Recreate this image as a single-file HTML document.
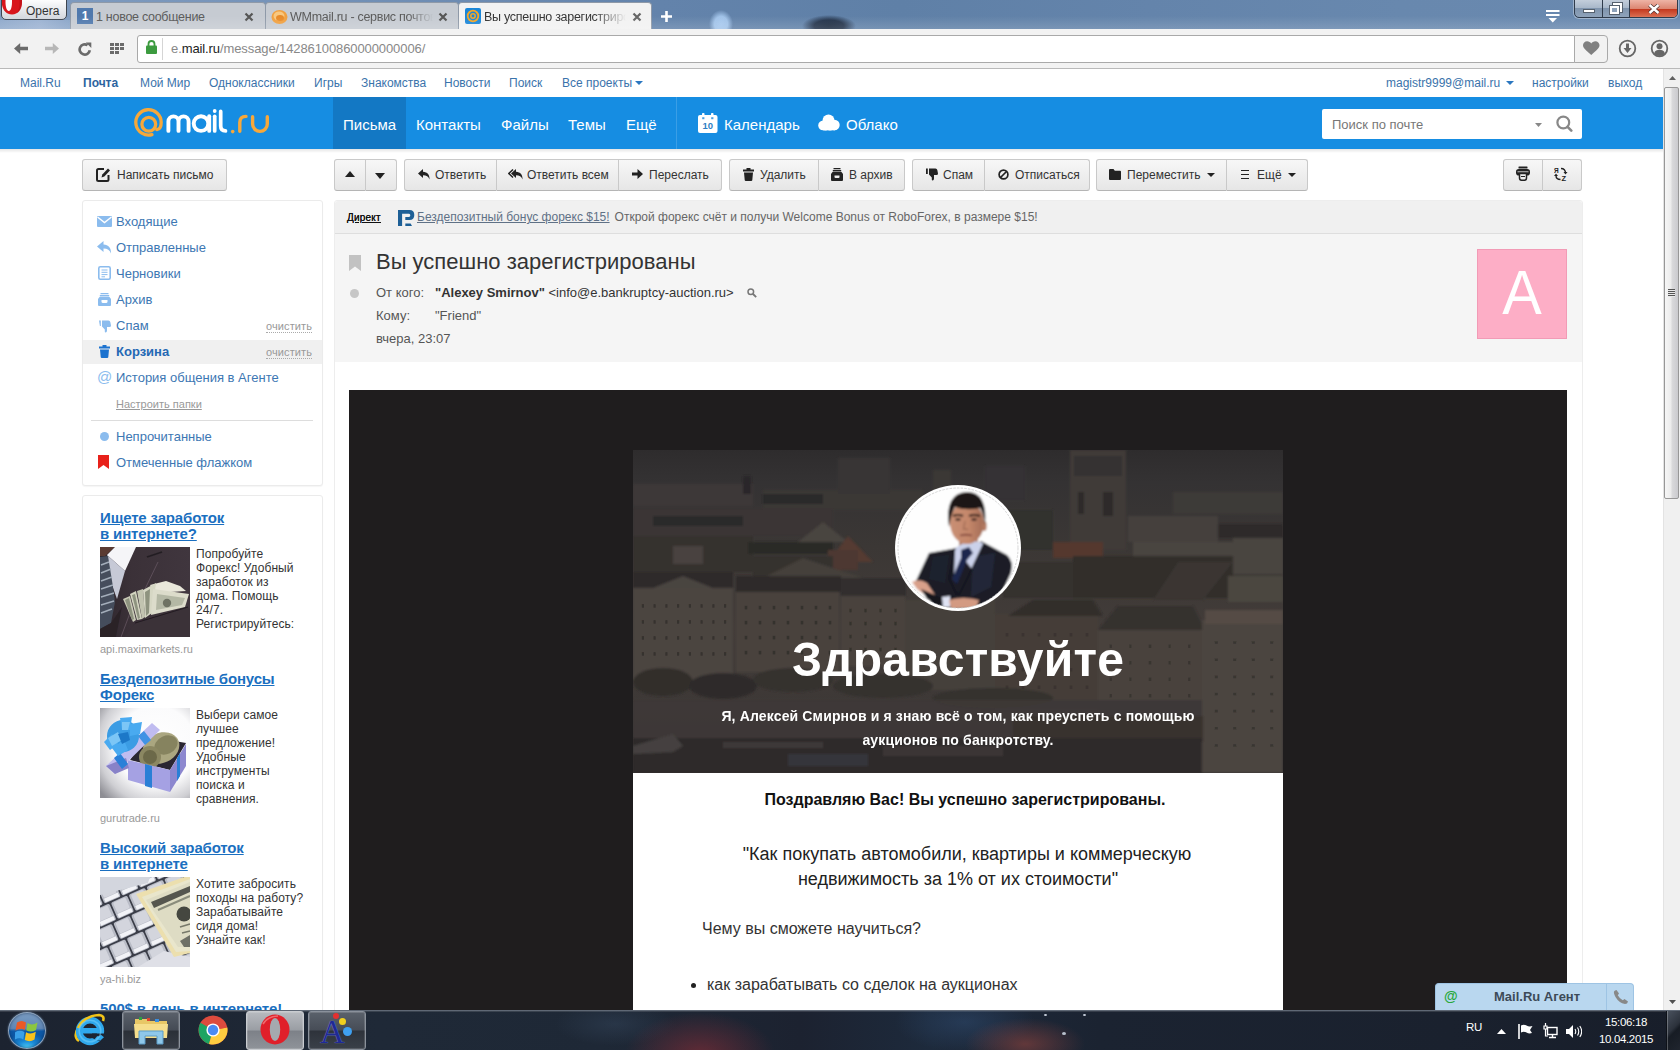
<!DOCTYPE html>
<html lang="ru">
<head>
<meta charset="utf-8">
<title>Вы успешно зарегистрированы</title>
<style>
*{box-sizing:border-box;margin:0;padding:0}
html,body{width:1680px;height:1050px;overflow:hidden;background:#fff}
body{font-family:"Liberation Sans",sans-serif;font-size:13px;color:#333;position:relative}
.abs{position:absolute}
a{text-decoration:none;color:inherit}

/* ---------- browser chrome ---------- */
#titlebar{left:0;top:0;width:1680px;height:30px;background:linear-gradient(90deg,#809cc0 0,#7593b9 280px,#6383ab 660px,#5f80a7 900px,#6484ab 1150px,#6888ae 1400px,#6a89af 1680px)}
#toolbar{left:0;top:29px;width:1680px;height:40px;background:#f2f2f2;border-bottom:1px solid #b9b9b9}
.tab{top:2px;height:28px;font-size:13px;color:#555;white-space:nowrap;overflow:hidden}
.tab .t{position:absolute;top:6px;font-size:13px;letter-spacing:-0.1px}
.tab .x{position:absolute;top:4px;font-size:15px;font-weight:bold;color:#6a6a6a}
#urlbar{left:137px;top:35px;width:1438px;height:28px;background:#fff;border:1px solid #a9a9a9;border-radius:3px 0 0 3px}

/* ---------- portal nav ---------- */
#pnav{left:0;top:69px;width:1663px;height:28px;background:#fff;font-size:12px;color:#3a73ab}
#pnav span{position:absolute;top:7px;white-space:nowrap}

/* ---------- blue header ---------- */
#bluehead{left:0;top:97px;width:1663px;height:52px;background:#168de2}
#bluehead .nv{position:absolute;top:19px;font-size:15px;color:#fff;white-space:nowrap}

/* ---------- toolbar buttons ---------- */
.btn{top:159px;height:32px;border:1px solid #c9c9c9;border-bottom-color:#b5b5b5;background:linear-gradient(#f7f7f7,#e6e6e6);font-size:12px;color:#333;white-space:nowrap}
.btn.l{border-radius:3px 0 0 3px}
.btn.r{border-radius:0 3px 3px 0;border-left:none}
.btn.m{border-left:none}
.btn.s{border-radius:3px}
.bt{top:168px;font-size:12px;color:#333;white-space:nowrap;line-height:15px}
.btn svg{position:absolute}

.sl{left:116px;font-size:13px;color:#3d77b3;white-space:nowrap;line-height:15px}
.cl{left:266px;font-size:11px;color:#999;white-space:nowrap;line-height:12px;border-bottom:1px dotted #aaa;letter-spacing:0.1px}
.ah{left:100px;font-size:15px;font-weight:bold;color:#1a6fc0;text-decoration:underline;line-height:16px;white-space:nowrap;letter-spacing:-0.15px;margin-top:1px}
.ai{left:100px;width:90px;height:90px;background:#444;overflow:hidden}
.at{left:196px;font-size:12px;color:#333;line-height:14px;white-space:nowrap;letter-spacing:0.08px}
.au{left:100px;font-size:11px;color:#999;white-space:nowrap;line-height:13px;margin-top:1px}
.hf{font-size:13px;color:#555;white-space:nowrap;line-height:15px}
/* ---------- scrollbar ---------- */
#vscroll{left:1663px;top:69px;width:17px;height:941px;background:#f0f0f0;border-left:1px solid #e3e3e3}

/* ---------- taskbar ---------- */
#taskbar{left:0;top:1010px;width:1680px;height:40px;background:#1b2535;overflow:hidden}
.tb{top:1px;height:39px;border:1px solid #8a919b;border-radius:3px;box-shadow:inset 0 0 0 1px rgba(255,255,255,.15)}
</style>
</head>
<body>

<!-- ===== title bar / tabs ===== -->
<div id="titlebar" class="abs"></div>
<div class="abs" style="left:706px;top:8px;width:30px;height:22px;background:radial-gradient(ellipse 12px 14px at 15px 16px,#a6c8ee 0,#a0c2e8 55%,rgba(160,194,232,0) 100%)"></div>
<div class="abs" style="left:796px;top:10px;width:66px;height:20px;background:radial-gradient(ellipse 27px 11px at 33px 16px,#1b2a3f 0,#22324a 55%,rgba(34,50,74,0) 100%)"></div>
<!-- Opera menu button -->
<div class="abs" style="left:0;top:20px;width:70px;height:10px;background:linear-gradient(90deg,#8fa9cb,#9bb2d2 40px,#8aa5c8 70px)"></div>
<div class="abs" style="left:1px;top:-2px;width:66px;height:22px;background:linear-gradient(#ffffff,#e4e7eb 60%,#d3d7dd);border:1px solid #3e4650;border-radius:0 0 5px 5px"></div>
<svg class="abs" style="left:2px;top:0" width="21" height="15" viewBox="0 0 21 15"><path d="M0 0H20V2C20 9.500 16 14.500 10 14.500C4.500 14.500 1 10.500 0 5Z" fill="#d8161c"/><path d="M3.500 0H10V2C10 7 8.800 11 6.800 11C4.800 11 3.500 7 3.500 2Z" fill="#fff"/><path d="M10 0H20V2C20 7 18 11 15 13C17 10 17.500 6 17.500 2V0Z" fill="#b80f15" opacity="0.600"/></svg>
<div class="abs" style="left:26px;top:4px;font-size:12px;color:#333;letter-spacing:0">Opera</div>

<!-- tab 1 -->
<div class="abs tab" style="left:70px;width:196px;background:#c6cbd2;border:1px solid #8e99a8;border-bottom:none;border-radius:4px 4px 0 0"></div>
<div class="abs" style="left:77px;top:8px;width:16px;height:16px;background:#5079ad;color:#fff;font-size:12px;font-weight:bold;text-align:center;line-height:17px">1</div>
<div class="abs" style="left:96px;top:10px;font-size:12.500px;color:#5a5a5a;letter-spacing:-0.28px">1 новое сообщение</div>
<svg class="abs" style="left:244px;top:12px" width="10" height="10" viewBox="0 0 10 10"><path d="M1.500 1.500L8.500 8.500M8.500 1.500L1.500 8.500" stroke="#555" stroke-width="2.200"/></svg>

<!-- tab 2 -->
<div class="abs tab" style="left:265px;width:194px;background:#c6cbd2;border:1px solid #8e99a8;border-bottom:none;border-radius:4px 4px 0 0"></div>
<svg class="abs" style="left:271px;top:8px" width="17" height="17" viewBox="0 0 17 17"><ellipse cx="8.500" cy="9" rx="8" ry="7" fill="#f0a040"/><ellipse cx="8" cy="8" rx="5.500" ry="4.500" fill="#f8c880"/><ellipse cx="9" cy="10" rx="4" ry="3" fill="#e88a28"/></svg>
<div class="abs" style="left:290px;top:10px;width:143px;overflow:hidden;white-space:nowrap;font-size:12.500px;color:#5a5a5a;letter-spacing:-0.28px;-webkit-mask-image:linear-gradient(90deg,#000 118px,transparent 143px)">WMmail.ru - сервис почтовых</div>
<svg class="abs" style="left:438px;top:12px" width="10" height="10" viewBox="0 0 10 10"><path d="M1.500 1.500L8.500 8.500M8.500 1.500L1.500 8.500" stroke="#555" stroke-width="2.200"/></svg>

<!-- tab 3 active -->
<div class="abs tab" style="left:458px;width:194px;height:28px;background:#f2f2f2;border:1px solid #8e99a8;border-bottom:none;border-radius:4px 4px 0 0"></div>
<svg class="abs" style="left:465px;top:8px" width="16" height="16" viewBox="0 0 16 16"><rect width="16" height="16" rx="2" fill="#1a86d8"/><circle cx="8" cy="8" r="5.300" fill="none" stroke="#f5a623" stroke-width="1.800"/><circle cx="8" cy="8" r="2.200" fill="none" stroke="#f5a623" stroke-width="1.500"/></svg>
<div class="abs" style="left:484px;top:10px;width:142px;overflow:hidden;white-space:nowrap;font-size:12.500px;color:#333;letter-spacing:-0.28px;-webkit-mask-image:linear-gradient(90deg,#000 110px,transparent 142px)">Вы успешно зарегистрированы</div>
<svg class="abs" style="left:632px;top:12px" width="10" height="10" viewBox="0 0 10 10"><path d="M1.500 1.500L8.500 8.500M8.500 1.500L1.500 8.500" stroke="#666" stroke-width="2.200"/></svg>
<!-- new tab plus -->
<svg class="abs" style="left:660px;top:10px" width="13" height="13" viewBox="0 0 13 13"><path d="M6.500 1V12M1 6.500H12" stroke="#fff" stroke-width="2.600"/></svg>

<!-- window controls -->
<div class="abs" style="left:0;top:16px;width:1680px;height:14px;background:linear-gradient(rgba(255,255,255,0),rgba(255,255,255,.16))"></div>
<svg class="abs" style="left:1546px;top:10px" width="14" height="13" viewBox="0 0 14 13"><path d="M0 1H13.500M0 5H13.500" stroke="#fff" stroke-width="2"/><path d="M2.500 8H11L6.750 12.500Z" fill="#fff"/></svg>
<div class="abs" style="left:1574px;top:-1px;width:104px;height:19px;border:1px solid #2f3b4b;border-radius:0 0 5px 5px;background:linear-gradient(#c3cedb,#a9b8ca 45%,#7f94ad 50%,#8fa3ba);overflow:hidden;box-shadow:0 0 0 1px rgba(255,255,255,.35)">
 <div class="abs" style="left:27px;top:0;width:1px;height:19px;background:#2f3b4b"></div>
 <div class="abs" style="left:54px;top:0;width:1px;height:19px;background:#2f3b4b"></div>
 <div class="abs" style="left:55px;top:0;width:48px;height:19px;background:linear-gradient(#eeb4a6,#dc8672 45%,#c43a20 50%,#d9694c 85%,#e99a84)"></div>
 <div class="abs" style="left:8px;top:9px;width:12px;height:4px;background:#fff;border:1px solid #56616e"></div>
 <div class="abs" style="left:38px;top:3px;width:9px;height:9px;border:2px solid #fff;outline:1px solid #56616e;background:#a9b8ca"></div>
 <div class="abs" style="left:35px;top:6px;width:9px;height:8px;border:2px solid #fff;outline:1px solid #56616e;background:#8fa3ba"></div>
 <svg class="abs" style="left:73px;top:4px" width="12" height="10" viewBox="0 0 12 10"><path d="M1.500 1L10.500 9M10.500 1L1.500 9" stroke="#4a3030" stroke-width="3.800"/><path d="M1.500 1L10.500 9M10.500 1L1.500 9" stroke="#fff" stroke-width="2.400"/></svg>
</div>

<div id="toolbar" class="abs"></div>
<!-- nav icons -->
<svg class="abs" style="left:14px;top:43px" width="14" height="11" viewBox="0 0 14 11"><path d="M6.200 0L0 5.500L6.200 11V7.300H14V3.700H6.200Z" fill="#6b6b6b"/></svg>
<svg class="abs" style="left:45px;top:43px" width="14" height="11" viewBox="0 0 14 11"><path d="M7.800 0L14 5.500L7.800 11V7.300H0V3.700H7.800Z" fill="#b7b7b7"/></svg>
<svg class="abs" style="left:78px;top:42px" width="14" height="14" viewBox="0 0 14 14"><path d="M11.800 8.300A5.100 5.100 0 1 1 9.600 3.200" fill="none" stroke="#6b6b6b" stroke-width="2.700"/><path d="M7.800 0.500H13.300V6Z" fill="#6b6b6b"/></svg>
<svg class="abs" style="left:110px;top:43px" width="14" height="11" viewBox="0 0 14 11"><g fill="#6b6b6b"><rect x="0" y="0" width="4" height="3"/><rect x="5" y="0" width="4" height="3"/><rect x="10" y="0" width="4" height="3"/><rect x="0" y="4" width="4" height="3"/><rect x="5" y="4" width="4" height="3"/><rect x="10" y="4" width="4" height="3"/><rect x="0" y="8" width="4" height="3"/><rect x="5" y="8" width="4" height="3"/></g></svg>
<div id="urlbar" class="abs"></div>
<svg class="abs" style="left:146px;top:40px" width="11" height="14" viewBox="0 0 11 14"><path d="M2.500 6V4A3 3 0 0 1 8.500 4V6" fill="none" stroke="#3c9b3f" stroke-width="1.800"/><rect x="0" y="5.500" width="11" height="8.500" rx="1" fill="#3c9b3f"/></svg>
<div class="abs" style="left:162px;top:38px;width:1px;height:22px;background:#d5d5d5"></div>
<div class="abs" style="left:171px;top:41px;font-size:13px;color:#888;letter-spacing:-0.1px;white-space:nowrap">e.<span style="color:#222">mail.ru</span>/message/14286100860000000006/</div>
<!-- heart -->
<div class="abs" style="left:1574px;top:35px;width:34px;height:28px;background:#f2f2f2;border:1px solid #a9a9a9;border-radius:0 4px 4px 0"></div>
<svg class="abs" style="left:1583px;top:41px" width="16.500" height="14" viewBox="0 0 18 15"><path d="M9 15C3 10 0 7.500 0 4.500C0 2 2 0 4.500 0C6.500 0 8 1 9 2.500C10 1 11.500 0 13.500 0C16 0 18 2 18 4.500C18 7.500 15 10 9 15Z" fill="#808080"/></svg>
<svg class="abs" style="left:1618px;top:39px" width="19" height="19" viewBox="0 0 19 19"><circle cx="9.500" cy="9.500" r="7.800" fill="none" stroke="#666" stroke-width="1.800"/><path d="M8 4.500H11V9H13.500L9.500 14L5.500 9H8Z" fill="#666"/></svg>
<svg class="abs" style="left:1650px;top:39px" width="19" height="19" viewBox="0 0 19 19"><circle cx="9.500" cy="9.500" r="7.800" fill="none" stroke="#666" stroke-width="1.800"/><circle cx="9.500" cy="7.300" r="3" fill="#666"/><path d="M4 14.500C5 11.500 7 10.800 9.500 10.800C12 10.800 14 11.500 15 14.500C13.500 16.300 11.500 17 9.500 17C7.500 17 5.500 16.300 4 14.500Z" fill="#666"/></svg>

<!-- ===== portal nav ===== -->
<div id="pnav" class="abs">
<span style="left:20px">Mail.Ru</span>
<span style="left:83px;font-weight:bold;color:#2d64a0">Почта</span>
<span style="left:140px">Мой Мир</span>
<span style="left:209px">Одноклассники</span>
<span style="left:314px">Игры</span>
<span style="left:361px">Знакомства</span>
<span style="left:444px">Новости</span>
<span style="left:509px">Поиск</span>
<span style="left:562px">Все проекты</span>
<svg class="abs" style="left:635px;top:12px" width="8" height="4" viewBox="0 0 8 4"><path d="M0 0H8L4 4Z" fill="#2b77c0"/></svg>
<span style="left:1386px">magistr9999@mail.ru</span>
<svg class="abs" style="left:1506px;top:12px" width="8" height="4" viewBox="0 0 8 4"><path d="M0 0H8L4 4Z" fill="#2b77c0"/></svg>
<span style="left:1532px">настройки</span>
<span style="left:1608px">выход</span>
</div>

<!-- ===== blue header ===== -->
<div id="bluehead" class="abs">
 <div class="abs" style="left:333px;top:0;width:73px;height:52px;background:#1378c4"></div>
 <!-- logo -->
 <svg class="abs" style="left:132px;top:10px" width="140" height="32" viewBox="0 0 140 32">
  <g fill="none" stroke-linecap="round" stroke-linejoin="round">
   <circle cx="16.800" cy="17.200" r="6.900" stroke="#f7a83a" stroke-width="3.300"/>
   <path d="M20 27.600A12.700 12.700 0 1 1 29.200 15.300C29.200 19.500 28 22.800 24.800 22.600" stroke="#f7a83a" stroke-width="3.300"/>
   <path d="M36.400 23.900V14.400A5.050 5.050 0 0 1 46.500 14.400V23.900M46.500 14.400A5.050 5.050 0 0 1 56.600 14.400V23.900" stroke="#fff" stroke-width="3.900"/>
   <circle cx="69" cy="16.600" r="7.300" stroke="#fff" stroke-width="3.900"/>
   <path d="M77.200 9.300V23.900" stroke="#fff" stroke-width="3.900"/>
   <path d="M82.700 9.300V23.900" stroke="#fff" stroke-width="3.700"/>
   <circle cx="82.700" cy="4" r="1.900" fill="#fff" stroke="none"/>
   <path d="M88.700 4.400V19Q88.700 23.900 93.500 23.900" stroke="#fff" stroke-width="3.700"/>
   <circle cx="100.700" cy="24.600" r="1.800" fill="#f7a83a" stroke="none"/>
   <path d="M107.800 24.200V15.500Q107.800 9.400 114 9.400" stroke="#f7a83a" stroke-width="3.400"/>
   <path d="M120.600 9.800V17A7.350 7.350 0 0 0 135.300 17V9.800" stroke="#f7a83a" stroke-width="3.400"/>
  </g>
 </svg>
 <span class="nv" style="left:343px">Письма</span>
 <span class="nv" style="left:416px">Контакты</span>
 <span class="nv" style="left:501px">Файлы</span>
 <span class="nv" style="left:568px">Темы</span>
 <span class="nv" style="left:626px">Ещё</span>
 <div class="abs" style="left:676px;top:0;width:1px;height:52px;background:#3a9ee6"></div>
 <!-- calendar icon -->
 <svg class="abs" style="left:698px;top:16px" width="20" height="20" viewBox="0 0 20 20"><rect x="0" y="2" width="19.500" height="18" rx="2" fill="#fff"/><rect x="4" y="0" width="2.500" height="4" rx="0.800" fill="#fff"/><rect x="13" y="0" width="2.500" height="4" rx="0.800" fill="#fff"/><rect x="4.200" y="4.200" width="2.200" height="2" fill="#4a9fe0"/><rect x="13.200" y="4.200" width="2.200" height="2" fill="#4a9fe0"/><text x="9.800" y="16" font-family="Liberation Sans, sans-serif" font-size="9.500" font-weight="bold" fill="#2f7fc4" text-anchor="middle">10</text></svg>
 <span class="nv" style="left:724px">Календарь</span>
 <!-- cloud icon -->
 <svg class="abs" style="left:818px;top:17px" width="22" height="17" viewBox="0 0 22 17"><circle cx="5" cy="11.500" r="4.800" fill="#fff"/><circle cx="10.500" cy="6.500" r="6" fill="#fff"/><circle cx="16.500" cy="11" r="5.200" fill="#fff"/><rect x="5" y="9" width="12" height="7.300" fill="#fff"/><circle cx="7.500" cy="13" r="3.500" fill="#fff"/><circle cx="12" cy="13" r="3.500" fill="#fff"/></svg>
 <span class="nv" style="left:846px">Облако</span>
 <!-- search -->
 <div class="abs" style="left:1322px;top:12px;width:260px;height:30px;background:#fff;border-radius:2px"></div>
 <span class="abs" style="left:1332px;top:20px;font-size:13px;color:#777;white-space:nowrap">Поиск по почте</span>
 <svg class="abs" style="left:1535px;top:26px" width="7" height="4" viewBox="0 0 7 4"><path d="M0 0H7L3.500 4Z" fill="#888"/></svg>
 <svg class="abs" style="left:1556px;top:18px" width="17" height="17" viewBox="0 0 17 17"><circle cx="7.300" cy="7.500" r="5.900" fill="none" stroke="#888" stroke-width="2.200"/><path d="M11.600 11.800L15.300 15.600" stroke="#888" stroke-width="2.600" stroke-linecap="round"/></svg>
</div>

<!-- ===== buttons ===== -->
<div class="abs" style="left:0;top:149px;width:1663px;height:4px;background:linear-gradient(rgba(0,0,0,.10),rgba(0,0,0,0))"></div>
<!-- compose -->
<div class="abs btn s" style="left:82px;width:145px"></div>
<svg class="abs" style="left:96px;top:167px" width="15" height="15" viewBox="0 0 15 15"><path d="M8 2H2.500Q1 2 1 3.500V12.500Q1 14 2.500 14H11Q12.500 14 12.500 12.500V8" fill="none" stroke="#222" stroke-width="2"/><path d="M5.500 10.500L6.300 7.500L12 1.500L14 3.500L8.300 9.500Z" fill="#222"/></svg>
<div class="abs bt" style="left:117px">Написать письмо</div>
<!-- up/down -->
<div class="abs btn l" style="left:334px;width:32px"></div><div class="abs btn r" style="left:366px;width:31px"></div>
<svg class="abs" style="left:345px;top:171px" width="10" height="6" viewBox="0 0 10 6"><path d="M0 6H10L5 0Z" fill="#222"/></svg>
<svg class="abs" style="left:375px;top:173px" width="10" height="6" viewBox="0 0 10 6"><path d="M0 0H10L5 6Z" fill="#222"/></svg>
<!-- reply group -->
<div class="abs btn l" style="left:404px;width:93px"></div><div class="abs btn m" style="left:497px;width:122px"></div><div class="abs btn r" style="left:619px;width:103px"></div>
<svg class="abs" style="left:418px;top:169px" width="12" height="11" viewBox="0 0 12 11"><path d="M5 0L0 4.500L5 9V6.200C8.500 6.200 10.500 7.500 11.500 10.500C11.800 6 9.500 3 5 2.800Z" fill="#222"/></svg>
<div class="abs bt" style="left:435px">Ответить</div>
<svg class="abs" style="left:508px;top:169px" width="15" height="11" viewBox="0 0 15 11"><path d="M8 0L3 4.500L8 9V6.200C11.500 6.200 13.500 7.500 14.500 10.500C14.800 6 12.500 3 8 2.800Z" fill="#222"/><path d="M5 0.500L0.800 4.500L5 8.500" fill="none" stroke="#222" stroke-width="1.500"/></svg>
<div class="abs bt" style="left:527px">Ответить всем</div>
<svg class="abs" style="left:632px;top:169px" width="11" height="10" viewBox="0 0 11 10"><path d="M5.500 0L11 5L5.500 10V6.500H0V3.500H5.500Z" fill="#222"/></svg>
<div class="abs bt" style="left:649px">Переслать</div>
<!-- delete group -->
<div class="abs btn l" style="left:729px;width:90px"></div><div class="abs btn r" style="left:819px;width:86px"></div>
<svg class="abs" style="left:743px;top:168px" width="11" height="13" viewBox="0 0 11 13"><path d="M0 1.500H3.500V0H7.500V1.500H11V3.500H0Z" fill="#222"/><path d="M1 4.500H10L9.300 12Q9.200 13 8.200 13H2.800Q1.800 13 1.700 12Z" fill="#222"/></svg>
<div class="abs bt" style="left:760px">Удалить</div>
<svg class="abs" style="left:831px;top:168px" width="12" height="13" viewBox="0 0 12 13"><path d="M2.500 0H9.500V1.200H2.500ZM1.800 2H10.200V3.500H1.800Z" fill="#222"/><path d="M0 6L1.500 4H10.500L12 6V12Q12 13 11 13H1Q0 13 0 12Z" fill="#222"/><path d="M3.500 7.500H8.500V9Q8.500 10 7.500 10H4.500Q3.500 10 3.500 9Z" fill="#eee"/></svg>
<div class="abs bt" style="left:849px">В архив</div>
<!-- spam group -->
<div class="abs btn l" style="left:912px;width:73px"></div><div class="abs btn r" style="left:985px;width:105px"></div>
<svg class="abs" style="left:926px;top:168px" width="12" height="13" viewBox="0 0 12 13"><path d="M0 0.500H1.800V6H0Z" fill="#222"/><path d="M3 0.500H9.500Q11 0.500 11.300 2L12 5.500Q12 7 10.500 7H8V10.500Q8 12.500 6.500 12.500Q5.800 12.500 5.800 11.500V9.500L3 6.500Z" fill="#222"/></svg>
<div class="abs bt" style="left:943px">Спам</div>
<svg class="abs" style="left:998px;top:169px" width="11" height="11" viewBox="0 0 11 11"><circle cx="5.500" cy="5.500" r="4.400" fill="none" stroke="#222" stroke-width="1.700"/><path d="M2.500 8.500L8.500 2.500" stroke="#222" stroke-width="1.700"/></svg>
<div class="abs bt" style="left:1015px">Отписаться</div>
<!-- move group -->
<div class="abs btn l" style="left:1096px;width:131px"></div><div class="abs btn r" style="left:1227px;width:81px"></div>
<svg class="abs" style="left:1109px;top:169px" width="12" height="11" viewBox="0 0 12 11"><path d="M0 1Q0 0 1 0H4.500L5.800 1.800H11Q12 1.800 12 2.800V10Q12 11 11 11H1Q0 11 0 10Z" fill="#222"/></svg>
<div class="abs bt" style="left:1127px">Переместить</div>
<svg class="abs" style="left:1207px;top:173px" width="8" height="4" viewBox="0 0 8 4"><path d="M0 0H8L4 4Z" fill="#222"/></svg>
<svg class="abs" style="left:1241px;top:170px" width="8" height="9" viewBox="0 0 8 9"><path d="M0 0.500H8M0 4.500H8M0 8.500H8" stroke="#222" stroke-width="1.200"/></svg>
<div class="abs bt" style="left:1257px">Ещё</div>
<svg class="abs" style="left:1288px;top:173px" width="8" height="4" viewBox="0 0 8 4"><path d="M0 0H8L4 4Z" fill="#222"/></svg>
<!-- print/translate -->
<div class="abs btn l" style="left:1503px;width:40px"></div><div class="abs btn r" style="left:1543px;width:39px"></div>
<svg class="abs" style="left:1516px;top:166px" width="14" height="15" viewBox="0 0 14 15"><rect x="2.500" y="0.500" width="9" height="2" rx="0.500" fill="#222"/><rect x="0" y="3" width="14" height="6.500" rx="2.800" fill="#222"/><path d="M1.500 5.800H12.500" stroke="#ddd" stroke-width="0.900"/><path d="M3.500 7.500H10.500V12Q10.500 14.200 8.500 14.200H5.500Q3.500 14.200 3.500 12Z" fill="#eee" stroke="#222" stroke-width="1.500"/><path d="M5 10.500H9" stroke="#222" stroke-width="1"/></svg>
<svg class="abs" style="left:1554px;top:167px" width="14" height="14" viewBox="0 0 14 14"><text x="0" y="5.500" font-family="Liberation Sans, sans-serif" font-size="6.500" font-weight="bold" fill="#222">Я</text><text x="7.500" y="13.500" font-family="Liberation Sans, sans-serif" font-size="7.500" font-weight="bold" fill="#222">Z</text><path d="M7 1.500Q11.500 1.500 11.500 6" fill="none" stroke="#222" stroke-width="1.400"/><path d="M9.500 5H13.500L11.500 7.500Z" fill="#222"/><path d="M6.500 12.500Q2 12.500 2 8.500" fill="none" stroke="#222" stroke-width="1.400"/><path d="M0 9H4L2 6.500Z" fill="#222"/></svg>


<!-- ===== sidebar ===== -->
<div class="abs" style="left:82px;top:200px;width:241px;height:286px;border:1px solid #ebebeb;border-radius:3px;box-shadow:0 1px 1px rgba(0,0,0,.04);background:#fff"></div>
<div class="abs" style="left:83px;top:340px;width:239px;height:24px;background:#f0f0f0"></div>
<!-- icons -->
<svg class="abs" style="left:97px;top:216px" width="15" height="11" viewBox="0 0 15 11"><rect width="15" height="11" rx="1" fill="#8bbcee"/><path d="M0.500 1L7.500 6.500L14.500 1" fill="none" stroke="#fff" stroke-width="1.400"/></svg>
<svg class="abs" style="left:97px;top:241px" width="15" height="13" viewBox="0 0 15 13"><path d="M6.500 0L0 5.500L6.500 11V7.500C10.500 7.500 12.800 9 14 12.500C14.300 7 11.500 3.700 6.500 3.500Z" fill="#8bbcee"/></svg>
<svg class="abs" style="left:98px;top:266px" width="13" height="14" viewBox="0 0 13 14"><rect x="0.800" y="0.800" width="11.400" height="12.400" rx="1.500" fill="#fff" stroke="#8bbcee" stroke-width="1.600"/><path d="M3.500 4H9.500M3.500 6.300H9.500M3.500 8.600H9.500M3.500 10.800H7" stroke="#8bbcee" stroke-width="1"/></svg>
<svg class="abs" style="left:98px;top:293px" width="13" height="13" viewBox="0 0 13 13"><path d="M2.500 0H10.500V1.200H2.500ZM1.800 2H11.200V3.500H1.800Z" fill="#8bbcee"/><path d="M0 6L1.500 4H11.500L13 6V12Q13 13 12 13H1Q0 13 0 12Z" fill="#8bbcee"/><path d="M3.500 7H9.500V8.500Q9.500 10 8 10H5Q3.500 10 3.500 8.500Z" fill="#fff"/></svg>
<svg class="abs" style="left:99px;top:320px" width="12" height="13" viewBox="0 0 12 13"><path d="M0 0.500H1.800V6L0.900 6Z" fill="#8bbcee"/><path d="M3 0.500H9.500Q11 0.500 11.300 2L12 5.500Q12 7 10.500 7H8V10.500Q8 12.500 6.500 12.500Q5.800 12.500 5.800 11.500V9.500L3 6.500Z" fill="#8bbcee"/></svg>
<svg class="abs" style="left:99px;top:345px" width="11" height="13" viewBox="0 0 11 13"><path d="M0 1.500H3.500V0H7.500V1.500H11V3.500H0Z" fill="#1d73cf"/><path d="M1 4.500H10L9.300 12Q9.200 13 8.200 13H2.800Q1.800 13 1.700 12Z" fill="#1d73cf"/></svg>
<div class="abs" style="left:97px;top:368px;font-size:15px;color:#8bbcee;line-height:17px">@</div>
<!-- labels -->
<div class="abs sl" style="top:214px">Входящие</div>
<div class="abs sl" style="top:240px">Отправленные</div>
<div class="abs sl" style="top:266px">Черновики</div>
<div class="abs sl" style="top:292px">Архив</div>
<div class="abs sl" style="top:318px">Спам</div>
<div class="abs sl" style="top:344px;font-weight:bold;color:#2468b4">Корзина</div>
<div class="abs sl" style="top:370px">История общения в Агенте</div>
<div class="abs cl" style="top:320px">очистить</div>
<div class="abs cl" style="top:346px">очистить</div>
<div class="abs" style="left:116px;top:398px;font-size:11px;color:#999;text-decoration:underline;white-space:nowrap">Настроить папки</div>
<div class="abs" style="left:91px;top:420px;width:222px;height:1px;background:#ddd"></div>
<div class="abs" style="left:100px;top:432px;width:9px;height:9px;border-radius:50%;background:#8bbcee"></div>
<svg class="abs" style="left:98px;top:455px" width="11" height="14" viewBox="0 0 11 14"><path d="M0 0H11V14L5.500 10L0 14Z" fill="#e8211a"/></svg>
<div class="abs sl" style="top:429px">Непрочитанные</div>
<div class="abs sl" style="top:455px">Отмеченные флажком</div>

<!-- ad box -->
<div class="abs" style="left:82px;top:495px;width:241px;height:530px;border:1px solid #ebebeb;border-radius:3px;box-shadow:0 1px 1px rgba(0,0,0,.04);background:#fff"></div>
<div class="abs ah" style="top:509px">Ищете заработок<br>в интернете?</div>
<div class="abs ai" id="ad1" style="top:547px"><svg width="90" height="90" viewBox="0 0 90 90"><defs><filter id="a1b"><feGaussianBlur stdDeviation="0.450"/></filter><linearGradient id="a1g" x1="0" y1="0" x2="1" y2="0"><stop offset="0" stop-color="#2e262c"/><stop offset="0.350" stop-color="#3b3138"/><stop offset="1" stop-color="#40363e"/></linearGradient></defs>
<rect width="90" height="90" fill="url(#a1g)"/>
<g filter="url(#a1b)">
<path d="M0 0H15L5 9H0Z" fill="#5a3b32"/>
<path d="M15 0H36L25 24L7 8Z" fill="#f5f5f8"/>
<path d="M7 8L25 24L17 52L12 38Z" fill="#c6c9d6"/>
<path d="M0 10L8 9L13 40L15 55L11 76L0 82Z" fill="#454e5c"/>
<path d="M1 18L9 15M1 26L11 22M1 34L12 30M1 42L13 38M1 50L14 46M1 58L14 54M1 66L12 62" stroke="#a3adba" stroke-width="1.500"/>
<path d="M47 10L62 5" stroke="#241d22" stroke-width="1.400"/>
<path d="M58 15L45 42M36 50L21 90" stroke="#6a5a66" stroke-width="0.700"/>
<path d="M0 82L11 76L22 60L16 90H0Z" fill="#2a2228"/>
<path d="M50 38L66 34L80 39L86 44L55 46Z" fill="#e9e7da"/>
<path d="M23 52L30 49L36 73L33 75Z" fill="#c9cab6"/>
<path d="M30 47L36 44L42 72L37 73Z" fill="#d3d4c0"/>
<path d="M37 44L43 42L45 70L42 72Z" fill="#c2c4b0"/>
<path d="M43 43L56 36L52 66L45 71Z" fill="#d6d7c4"/>
<path d="M25 53L29 51L34 72L32 73ZM32 48L35 47L40 71L38 72ZM45 45L50 42L49 66L46 69Z" fill="#8e937f"/>
<path d="M53 42L89 47L85 60L51 68Z" fill="#dcdccb"/>
<path d="M57 47L85 51L82 58L56 63Z" fill="#b4b8a5"/>
<circle cx="67" cy="56" r="4.200" fill="#6e7264"/>
<path d="M35 76L88 60L90 62L90 90L24 90Z" fill="#3a3038"/>
<path d="M35 76L88 60" stroke="#221b20" stroke-width="1"/>
</g></svg></div>
<div class="abs at" style="top:547px">Попробуйте<br>Форекс! Удобный<br>заработок из<br>дома. Помощь<br>24/7.<br>Регистрируйтесь:</div>
<div class="abs au" style="top:642px">api.maximarkets.ru</div>
<div class="abs ah" style="top:670px">Бездепозитные бонусы<br>Форекс</div>
<div class="abs ai" id="ad2" style="top:708px"><svg width="90" height="90" viewBox="0 0 90 90"><defs><filter id="a2b"><feGaussianBlur stdDeviation="0.450"/></filter><radialGradient id="a2g" cx="0.620" cy="0.420" r="0.800"><stop offset="0" stop-color="#ffffff"/><stop offset="0.550" stop-color="#fbfbfc"/><stop offset="0.800" stop-color="#cfcfd3"/><stop offset="1" stop-color="#8e8e94"/></radialGradient></defs>
<rect width="90" height="90" fill="url(#a2g)"/>
<g filter="url(#a2b)">
<path d="M30 52L46 28L86 35L70 62Z" fill="#2b2630"/>
<ellipse cx="61" cy="40" rx="19" ry="15" transform="rotate(-25 61 40)" fill="#aaa680"/>
<ellipse cx="66" cy="37" rx="12" ry="9" transform="rotate(-25 66 37)" fill="#86835f"/>
<ellipse cx="50" cy="49" rx="11" ry="11" fill="#8b8762"/>
<ellipse cx="50" cy="49" rx="7" ry="7" fill="#6c6948"/>
<path d="M28 52L70 62L70 84L28 72Z" fill="#a5a1e3"/>
<path d="M70 62L86 36L86 58L70 84Z" fill="#8c87cf"/>
<path d="M45 56L52 58L52 80L45 78Z" fill="#2b7fd6"/>
<path d="M77 50L80 45L80 68L77 73Z" fill="#2b7fd6"/>
<path d="M6 58L52 15L60 22L15 66Z" fill="#c0bcf0"/>
<path d="M6 58L15 66L29 60L26 50Z" fill="#8882c8"/>
<path d="M14 50L20 45L28 56L22 61Z" fill="#2b80d8"/>
<path d="M38 28L44 23L51 32L45 37Z" fill="#3f92e4"/>
<circle cx="23" cy="28" r="16" fill="#3a9ce4"/>
<path d="M4 34L12 26L18 36L10 42ZM20 10L32 9L30 22L22 22ZM30 16L42 14L40 26L30 28ZM12 40L24 32L28 42L18 48Z" fill="#49aaf0"/>
<path d="M8 30L18 24L22 32L12 38ZM22 14L30 14L28 22L22 22Z" fill="#7cc6f6"/>
<path d="M18 26L28 24L30 32L22 36Z" fill="#1f78c8"/>
</g></svg></div>
<div class="abs at" style="top:708px">Выбери самое<br>лучшее<br>предложение!<br>Удобные<br>инструменты<br>поиска и<br>сравнения.</div>
<div class="abs au" style="top:811px">gurutrade.ru</div>
<div class="abs ah" style="top:839px">Высокий заработок<br>в интернете</div>
<div class="abs ai" id="ad3" style="top:877px"><svg width="90" height="90" viewBox="0 0 90 90"><defs><filter id="a3b"><feGaussianBlur stdDeviation="0.600"/></filter></defs>
<rect width="90" height="90" fill="#3a3d48"/>
<g filter="url(#a3b)">
<g transform="rotate(-24 45 45)"><rect x="-43.0" y="-45.0" width="17.800" height="17.800" rx="2" fill="#b9bcc6"/><rect x="-41.0" y="-44.0" width="13.500" height="11.500" rx="1.500" fill="#d3d5dd"/><rect x="-41.5" y="-32.0" width="15" height="4" fill="#f2f3f7"/><rect x="-23.5" y="-45.0" width="17.800" height="17.800" rx="2" fill="#b9bcc6"/><rect x="-21.5" y="-44.0" width="13.500" height="11.500" rx="1.500" fill="#d3d5dd"/><rect x="-22.0" y="-32.0" width="15" height="4" fill="#f2f3f7"/><rect x="-4.0" y="-45.0" width="17.800" height="17.800" rx="2" fill="#b9bcc6"/><rect x="-2.0" y="-44.0" width="13.500" height="11.500" rx="1.500" fill="#d3d5dd"/><rect x="-2.5" y="-32.0" width="15" height="4" fill="#f2f3f7"/><rect x="15.5" y="-45.0" width="17.800" height="17.800" rx="2" fill="#b9bcc6"/><rect x="17.5" y="-44.0" width="13.500" height="11.500" rx="1.500" fill="#d3d5dd"/><rect x="17.0" y="-32.0" width="15" height="4" fill="#f2f3f7"/><rect x="35.0" y="-45.0" width="17.800" height="17.800" rx="2" fill="#b9bcc6"/><rect x="37.0" y="-44.0" width="13.500" height="11.500" rx="1.500" fill="#d3d5dd"/><rect x="36.5" y="-32.0" width="15" height="4" fill="#f2f3f7"/><rect x="54.5" y="-45.0" width="17.800" height="17.800" rx="2" fill="#b9bcc6"/><rect x="56.5" y="-44.0" width="13.500" height="11.500" rx="1.500" fill="#d3d5dd"/><rect x="56.0" y="-32.0" width="15" height="4" fill="#f2f3f7"/><rect x="74.0" y="-45.0" width="17.800" height="17.800" rx="2" fill="#b9bcc6"/><rect x="76.0" y="-44.0" width="13.500" height="11.500" rx="1.500" fill="#d3d5dd"/><rect x="75.5" y="-32.0" width="15" height="4" fill="#f2f3f7"/><rect x="93.5" y="-45.0" width="17.800" height="17.800" rx="2" fill="#b9bcc6"/><rect x="95.5" y="-44.0" width="13.500" height="11.500" rx="1.500" fill="#d3d5dd"/><rect x="95.0" y="-32.0" width="15" height="4" fill="#f2f3f7"/><rect x="-37.0" y="-25.5" width="17.800" height="17.800" rx="2" fill="#b9bcc6"/><rect x="-35.0" y="-24.5" width="13.500" height="11.500" rx="1.500" fill="#d3d5dd"/><rect x="-35.5" y="-12.5" width="15" height="4" fill="#f2f3f7"/><rect x="-17.5" y="-25.5" width="17.800" height="17.800" rx="2" fill="#b9bcc6"/><rect x="-15.5" y="-24.5" width="13.500" height="11.500" rx="1.500" fill="#d3d5dd"/><rect x="-16.0" y="-12.5" width="15" height="4" fill="#f2f3f7"/><rect x="2.0" y="-25.5" width="17.800" height="17.800" rx="2" fill="#b9bcc6"/><rect x="4.0" y="-24.5" width="13.500" height="11.500" rx="1.500" fill="#d3d5dd"/><rect x="3.5" y="-12.5" width="15" height="4" fill="#f2f3f7"/><rect x="21.5" y="-25.5" width="17.800" height="17.800" rx="2" fill="#b9bcc6"/><rect x="23.5" y="-24.5" width="13.500" height="11.500" rx="1.500" fill="#d3d5dd"/><rect x="23.0" y="-12.5" width="15" height="4" fill="#f2f3f7"/><rect x="41.0" y="-25.5" width="17.800" height="17.800" rx="2" fill="#b9bcc6"/><rect x="43.0" y="-24.5" width="13.500" height="11.500" rx="1.500" fill="#d3d5dd"/><rect x="42.5" y="-12.5" width="15" height="4" fill="#f2f3f7"/><rect x="60.5" y="-25.5" width="17.800" height="17.800" rx="2" fill="#b9bcc6"/><rect x="62.5" y="-24.5" width="13.500" height="11.500" rx="1.500" fill="#d3d5dd"/><rect x="62.0" y="-12.5" width="15" height="4" fill="#f2f3f7"/><rect x="80.0" y="-25.5" width="17.800" height="17.800" rx="2" fill="#b9bcc6"/><rect x="82.0" y="-24.5" width="13.500" height="11.500" rx="1.500" fill="#d3d5dd"/><rect x="81.5" y="-12.5" width="15" height="4" fill="#f2f3f7"/><rect x="99.5" y="-25.5" width="17.800" height="17.800" rx="2" fill="#b9bcc6"/><rect x="101.5" y="-24.5" width="13.500" height="11.500" rx="1.500" fill="#d3d5dd"/><rect x="101.0" y="-12.5" width="15" height="4" fill="#f2f3f7"/><rect x="-43.0" y="-6.0" width="17.800" height="17.800" rx="2" fill="#b9bcc6"/><rect x="-41.0" y="-5.0" width="13.500" height="11.500" rx="1.500" fill="#d3d5dd"/><rect x="-41.5" y="7.0" width="15" height="4" fill="#f2f3f7"/><rect x="-23.5" y="-6.0" width="17.800" height="17.800" rx="2" fill="#b9bcc6"/><rect x="-21.5" y="-5.0" width="13.500" height="11.500" rx="1.500" fill="#d3d5dd"/><rect x="-22.0" y="7.0" width="15" height="4" fill="#f2f3f7"/><rect x="-4.0" y="-6.0" width="17.800" height="17.800" rx="2" fill="#b9bcc6"/><rect x="-2.0" y="-5.0" width="13.500" height="11.500" rx="1.500" fill="#d3d5dd"/><rect x="-2.5" y="7.0" width="15" height="4" fill="#f2f3f7"/><rect x="15.5" y="-6.0" width="17.800" height="17.800" rx="2" fill="#b9bcc6"/><rect x="17.5" y="-5.0" width="13.500" height="11.500" rx="1.500" fill="#d3d5dd"/><rect x="17.0" y="7.0" width="15" height="4" fill="#f2f3f7"/><rect x="35.0" y="-6.0" width="17.800" height="17.800" rx="2" fill="#b9bcc6"/><rect x="37.0" y="-5.0" width="13.500" height="11.500" rx="1.500" fill="#d3d5dd"/><rect x="36.5" y="7.0" width="15" height="4" fill="#f2f3f7"/><rect x="54.5" y="-6.0" width="17.800" height="17.800" rx="2" fill="#b9bcc6"/><rect x="56.5" y="-5.0" width="13.500" height="11.500" rx="1.500" fill="#d3d5dd"/><rect x="56.0" y="7.0" width="15" height="4" fill="#f2f3f7"/><rect x="74.0" y="-6.0" width="17.800" height="17.800" rx="2" fill="#b9bcc6"/><rect x="76.0" y="-5.0" width="13.500" height="11.500" rx="1.500" fill="#d3d5dd"/><rect x="75.5" y="7.0" width="15" height="4" fill="#f2f3f7"/><rect x="93.5" y="-6.0" width="17.800" height="17.800" rx="2" fill="#b9bcc6"/><rect x="95.5" y="-5.0" width="13.500" height="11.500" rx="1.500" fill="#d3d5dd"/><rect x="95.0" y="7.0" width="15" height="4" fill="#f2f3f7"/><rect x="-37.0" y="13.5" width="17.800" height="17.800" rx="2" fill="#b9bcc6"/><rect x="-35.0" y="14.5" width="13.500" height="11.500" rx="1.500" fill="#d3d5dd"/><rect x="-35.5" y="26.5" width="15" height="4" fill="#f2f3f7"/><rect x="-17.5" y="13.5" width="17.800" height="17.800" rx="2" fill="#b9bcc6"/><rect x="-15.5" y="14.5" width="13.500" height="11.500" rx="1.500" fill="#d3d5dd"/><rect x="-16.0" y="26.5" width="15" height="4" fill="#f2f3f7"/><rect x="2.0" y="13.5" width="17.800" height="17.800" rx="2" fill="#b9bcc6"/><rect x="4.0" y="14.5" width="13.500" height="11.500" rx="1.500" fill="#d3d5dd"/><rect x="3.5" y="26.5" width="15" height="4" fill="#f2f3f7"/><rect x="21.5" y="13.5" width="17.800" height="17.800" rx="2" fill="#b9bcc6"/><rect x="23.5" y="14.5" width="13.500" height="11.500" rx="1.500" fill="#d3d5dd"/><rect x="23.0" y="26.5" width="15" height="4" fill="#f2f3f7"/><rect x="41.0" y="13.5" width="17.800" height="17.800" rx="2" fill="#b9bcc6"/><rect x="43.0" y="14.5" width="13.500" height="11.500" rx="1.500" fill="#d3d5dd"/><rect x="42.5" y="26.5" width="15" height="4" fill="#f2f3f7"/><rect x="60.5" y="13.5" width="17.800" height="17.800" rx="2" fill="#b9bcc6"/><rect x="62.5" y="14.5" width="13.500" height="11.500" rx="1.500" fill="#d3d5dd"/><rect x="62.0" y="26.5" width="15" height="4" fill="#f2f3f7"/><rect x="80.0" y="13.5" width="17.800" height="17.800" rx="2" fill="#b9bcc6"/><rect x="82.0" y="14.5" width="13.500" height="11.500" rx="1.500" fill="#d3d5dd"/><rect x="81.5" y="26.5" width="15" height="4" fill="#f2f3f7"/><rect x="99.5" y="13.5" width="17.800" height="17.800" rx="2" fill="#b9bcc6"/><rect x="101.5" y="14.5" width="13.500" height="11.500" rx="1.500" fill="#d3d5dd"/><rect x="101.0" y="26.5" width="15" height="4" fill="#f2f3f7"/><rect x="-43.0" y="33.0" width="17.800" height="17.800" rx="2" fill="#b9bcc6"/><rect x="-41.0" y="34.0" width="13.500" height="11.500" rx="1.500" fill="#d3d5dd"/><rect x="-41.5" y="46.0" width="15" height="4" fill="#f2f3f7"/><rect x="-23.5" y="33.0" width="17.800" height="17.800" rx="2" fill="#b9bcc6"/><rect x="-21.5" y="34.0" width="13.500" height="11.500" rx="1.500" fill="#d3d5dd"/><rect x="-22.0" y="46.0" width="15" height="4" fill="#f2f3f7"/><rect x="-4.0" y="33.0" width="17.800" height="17.800" rx="2" fill="#b9bcc6"/><rect x="-2.0" y="34.0" width="13.500" height="11.500" rx="1.500" fill="#d3d5dd"/><rect x="-2.5" y="46.0" width="15" height="4" fill="#f2f3f7"/><rect x="15.5" y="33.0" width="17.800" height="17.800" rx="2" fill="#b9bcc6"/><rect x="17.5" y="34.0" width="13.500" height="11.500" rx="1.500" fill="#d3d5dd"/><rect x="17.0" y="46.0" width="15" height="4" fill="#f2f3f7"/><rect x="35.0" y="33.0" width="17.800" height="17.800" rx="2" fill="#b9bcc6"/><rect x="37.0" y="34.0" width="13.500" height="11.500" rx="1.500" fill="#d3d5dd"/><rect x="36.5" y="46.0" width="15" height="4" fill="#f2f3f7"/><rect x="54.5" y="33.0" width="17.800" height="17.800" rx="2" fill="#b9bcc6"/><rect x="56.5" y="34.0" width="13.500" height="11.500" rx="1.500" fill="#d3d5dd"/><rect x="56.0" y="46.0" width="15" height="4" fill="#f2f3f7"/><rect x="74.0" y="33.0" width="17.800" height="17.800" rx="2" fill="#b9bcc6"/><rect x="76.0" y="34.0" width="13.500" height="11.500" rx="1.500" fill="#d3d5dd"/><rect x="75.5" y="46.0" width="15" height="4" fill="#f2f3f7"/><rect x="93.5" y="33.0" width="17.800" height="17.800" rx="2" fill="#b9bcc6"/><rect x="95.5" y="34.0" width="13.500" height="11.500" rx="1.500" fill="#d3d5dd"/><rect x="95.0" y="46.0" width="15" height="4" fill="#f2f3f7"/><rect x="-37.0" y="52.5" width="17.800" height="17.800" rx="2" fill="#b9bcc6"/><rect x="-35.0" y="53.5" width="13.500" height="11.500" rx="1.500" fill="#d3d5dd"/><rect x="-35.5" y="65.5" width="15" height="4" fill="#f2f3f7"/><rect x="-17.5" y="52.5" width="17.800" height="17.800" rx="2" fill="#b9bcc6"/><rect x="-15.5" y="53.5" width="13.500" height="11.500" rx="1.500" fill="#d3d5dd"/><rect x="-16.0" y="65.5" width="15" height="4" fill="#f2f3f7"/><rect x="2.0" y="52.5" width="17.800" height="17.800" rx="2" fill="#b9bcc6"/><rect x="4.0" y="53.5" width="13.500" height="11.500" rx="1.500" fill="#d3d5dd"/><rect x="3.5" y="65.5" width="15" height="4" fill="#f2f3f7"/><rect x="21.5" y="52.5" width="17.800" height="17.800" rx="2" fill="#b9bcc6"/><rect x="23.5" y="53.5" width="13.500" height="11.500" rx="1.500" fill="#d3d5dd"/><rect x="23.0" y="65.5" width="15" height="4" fill="#f2f3f7"/><rect x="41.0" y="52.5" width="17.800" height="17.800" rx="2" fill="#b9bcc6"/><rect x="43.0" y="53.5" width="13.500" height="11.500" rx="1.500" fill="#d3d5dd"/><rect x="42.5" y="65.5" width="15" height="4" fill="#f2f3f7"/><rect x="60.5" y="52.5" width="17.800" height="17.800" rx="2" fill="#b9bcc6"/><rect x="62.5" y="53.5" width="13.500" height="11.500" rx="1.500" fill="#d3d5dd"/><rect x="62.0" y="65.5" width="15" height="4" fill="#f2f3f7"/><rect x="80.0" y="52.5" width="17.800" height="17.800" rx="2" fill="#b9bcc6"/><rect x="82.0" y="53.5" width="13.500" height="11.500" rx="1.500" fill="#d3d5dd"/><rect x="81.5" y="65.5" width="15" height="4" fill="#f2f3f7"/><rect x="99.5" y="52.5" width="17.800" height="17.800" rx="2" fill="#b9bcc6"/><rect x="101.5" y="53.5" width="13.500" height="11.500" rx="1.500" fill="#d3d5dd"/><rect x="101.0" y="65.5" width="15" height="4" fill="#f2f3f7"/><rect x="-43.0" y="72.0" width="17.800" height="17.800" rx="2" fill="#b9bcc6"/><rect x="-41.0" y="73.0" width="13.500" height="11.500" rx="1.500" fill="#d3d5dd"/><rect x="-41.5" y="85.0" width="15" height="4" fill="#f2f3f7"/><rect x="-23.5" y="72.0" width="17.800" height="17.800" rx="2" fill="#b9bcc6"/><rect x="-21.5" y="73.0" width="13.500" height="11.500" rx="1.500" fill="#d3d5dd"/><rect x="-22.0" y="85.0" width="15" height="4" fill="#f2f3f7"/><rect x="-4.0" y="72.0" width="17.800" height="17.800" rx="2" fill="#b9bcc6"/><rect x="-2.0" y="73.0" width="13.500" height="11.500" rx="1.500" fill="#d3d5dd"/><rect x="-2.5" y="85.0" width="15" height="4" fill="#f2f3f7"/><rect x="15.5" y="72.0" width="17.800" height="17.800" rx="2" fill="#b9bcc6"/><rect x="17.5" y="73.0" width="13.500" height="11.500" rx="1.500" fill="#d3d5dd"/><rect x="17.0" y="85.0" width="15" height="4" fill="#f2f3f7"/><rect x="35.0" y="72.0" width="17.800" height="17.800" rx="2" fill="#b9bcc6"/><rect x="37.0" y="73.0" width="13.500" height="11.500" rx="1.500" fill="#d3d5dd"/><rect x="36.5" y="85.0" width="15" height="4" fill="#f2f3f7"/><rect x="54.5" y="72.0" width="17.800" height="17.800" rx="2" fill="#b9bcc6"/><rect x="56.5" y="73.0" width="13.500" height="11.500" rx="1.500" fill="#d3d5dd"/><rect x="56.0" y="85.0" width="15" height="4" fill="#f2f3f7"/><rect x="74.0" y="72.0" width="17.800" height="17.800" rx="2" fill="#b9bcc6"/><rect x="76.0" y="73.0" width="13.500" height="11.500" rx="1.500" fill="#d3d5dd"/><rect x="75.5" y="85.0" width="15" height="4" fill="#f2f3f7"/><rect x="93.5" y="72.0" width="17.800" height="17.800" rx="2" fill="#b9bcc6"/><rect x="95.5" y="73.0" width="13.500" height="11.500" rx="1.500" fill="#d3d5dd"/><rect x="95.0" y="85.0" width="15" height="4" fill="#f2f3f7"/><rect x="-37.0" y="91.5" width="17.800" height="17.800" rx="2" fill="#b9bcc6"/><rect x="-35.0" y="92.5" width="13.500" height="11.500" rx="1.500" fill="#d3d5dd"/><rect x="-35.5" y="104.5" width="15" height="4" fill="#f2f3f7"/><rect x="-17.5" y="91.5" width="17.800" height="17.800" rx="2" fill="#b9bcc6"/><rect x="-15.5" y="92.5" width="13.500" height="11.500" rx="1.500" fill="#d3d5dd"/><rect x="-16.0" y="104.5" width="15" height="4" fill="#f2f3f7"/><rect x="2.0" y="91.5" width="17.800" height="17.800" rx="2" fill="#b9bcc6"/><rect x="4.0" y="92.5" width="13.500" height="11.500" rx="1.500" fill="#d3d5dd"/><rect x="3.5" y="104.5" width="15" height="4" fill="#f2f3f7"/><rect x="21.5" y="91.5" width="17.800" height="17.800" rx="2" fill="#b9bcc6"/><rect x="23.5" y="92.5" width="13.500" height="11.500" rx="1.500" fill="#d3d5dd"/><rect x="23.0" y="104.5" width="15" height="4" fill="#f2f3f7"/><rect x="41.0" y="91.5" width="17.800" height="17.800" rx="2" fill="#b9bcc6"/><rect x="43.0" y="92.5" width="13.500" height="11.500" rx="1.500" fill="#d3d5dd"/><rect x="42.5" y="104.5" width="15" height="4" fill="#f2f3f7"/><rect x="60.5" y="91.5" width="17.800" height="17.800" rx="2" fill="#b9bcc6"/><rect x="62.5" y="92.5" width="13.500" height="11.500" rx="1.500" fill="#d3d5dd"/><rect x="62.0" y="104.5" width="15" height="4" fill="#f2f3f7"/><rect x="80.0" y="91.5" width="17.800" height="17.800" rx="2" fill="#b9bcc6"/><rect x="82.0" y="92.5" width="13.500" height="11.500" rx="1.500" fill="#d3d5dd"/><rect x="81.5" y="104.5" width="15" height="4" fill="#f2f3f7"/><rect x="99.5" y="91.5" width="17.800" height="17.800" rx="2" fill="#b9bcc6"/><rect x="101.5" y="92.5" width="13.500" height="11.500" rx="1.500" fill="#d3d5dd"/><rect x="101.0" y="104.5" width="15" height="4" fill="#f2f3f7"/><rect x="-43.0" y="111.0" width="17.800" height="17.800" rx="2" fill="#b9bcc6"/><rect x="-41.0" y="112.0" width="13.500" height="11.500" rx="1.500" fill="#d3d5dd"/><rect x="-41.5" y="124.0" width="15" height="4" fill="#f2f3f7"/><rect x="-23.5" y="111.0" width="17.800" height="17.800" rx="2" fill="#b9bcc6"/><rect x="-21.5" y="112.0" width="13.500" height="11.500" rx="1.500" fill="#d3d5dd"/><rect x="-22.0" y="124.0" width="15" height="4" fill="#f2f3f7"/><rect x="-4.0" y="111.0" width="17.800" height="17.800" rx="2" fill="#b9bcc6"/><rect x="-2.0" y="112.0" width="13.500" height="11.500" rx="1.500" fill="#d3d5dd"/><rect x="-2.5" y="124.0" width="15" height="4" fill="#f2f3f7"/><rect x="15.5" y="111.0" width="17.800" height="17.800" rx="2" fill="#b9bcc6"/><rect x="17.5" y="112.0" width="13.500" height="11.500" rx="1.500" fill="#d3d5dd"/><rect x="17.0" y="124.0" width="15" height="4" fill="#f2f3f7"/><rect x="35.0" y="111.0" width="17.800" height="17.800" rx="2" fill="#b9bcc6"/><rect x="37.0" y="112.0" width="13.500" height="11.500" rx="1.500" fill="#d3d5dd"/><rect x="36.5" y="124.0" width="15" height="4" fill="#f2f3f7"/><rect x="54.5" y="111.0" width="17.800" height="17.800" rx="2" fill="#b9bcc6"/><rect x="56.5" y="112.0" width="13.500" height="11.500" rx="1.500" fill="#d3d5dd"/><rect x="56.0" y="124.0" width="15" height="4" fill="#f2f3f7"/><rect x="74.0" y="111.0" width="17.800" height="17.800" rx="2" fill="#b9bcc6"/><rect x="76.0" y="112.0" width="13.500" height="11.500" rx="1.500" fill="#d3d5dd"/><rect x="75.5" y="124.0" width="15" height="4" fill="#f2f3f7"/><rect x="93.5" y="111.0" width="17.800" height="17.800" rx="2" fill="#b9bcc6"/><rect x="95.5" y="112.0" width="13.500" height="11.500" rx="1.500" fill="#d3d5dd"/><rect x="95.0" y="124.0" width="15" height="4" fill="#f2f3f7"/></g>
<path d="M0 0H50L48 6L0 18Z" fill="#d3d6de"/>
<path d="M38 90L64 74L90 80V90Z" fill="#dfe0e7"/>
<path d="M36 17L90 -2L90 76L74 80Z" fill="#ecdfae"/>
<path d="M42 20L90 2L90 74L76 75Z" fill="#e9e6cc"/>
<path d="M46 23L90 5L90 70L78 70Z" fill="#dedcc4"/>
<path d="M51 25L90 9L90 15L54 31Z" fill="#55574f"/>
<path d="M58 33L90 19" stroke="#8a8c7c" stroke-width="2"/>
<circle cx="84" cy="37" r="7.500" fill="#44463f"/>
<path d="M80 50L90 47M82 56L90 54" stroke="#77796a" stroke-width="1.500"/>
<path d="M80 64L90 58V70L84 70Z" fill="#6e7066"/>
</g></svg></div>
<div class="abs at" style="top:877px">Хотите забросить<br>походы на работу?<br>Зарабатывайте<br>сидя дома!<br>Узнайте как!</div>
<div class="abs au" style="top:972px">ya-hi.biz</div>
<div class="abs ah" style="top:1000px">500$ в день в интернете!</div>


<!-- ===== main ===== -->
<div class="abs" style="left:334px;top:200px;width:1249px;height:830px;border:1px solid #ededed;border-radius:3px;background:#fff"></div>
<div class="abs" style="left:335px;top:201px;width:1247px;height:33px;background:#f0f0f0;border-bottom:1px solid #dedede;border-radius:3px 3px 0 0"></div>
<div class="abs" style="left:335px;top:234px;width:1247px;height:128px;background:#f5f5f5"></div>
<!-- direct -->
<div class="abs" style="left:347px;top:212px;font-size:10px;color:#111;text-decoration:underline;line-height:12px;letter-spacing:0.22px;text-shadow:0 0 0.4px #111">Директ</div>
<svg class="abs" style="left:398px;top:210px" width="17" height="16" viewBox="0 0 17 16"><path d="M0 0H11.500Q16.300 0 16.300 5Q16.300 10.100 11.500 10.100H7.300V7H11Q12.300 7 12.300 5.300Q12.300 3.700 11 3.700H4.100V16H0Z" fill="#1d5f96"/><path d="M7.300 13.400H12.600L14 16H7.300Z" fill="#1d5f96"/></svg>
<div class="abs" style="left:417px;top:210px;font-size:12px;line-height:14px;white-space:nowrap;color:#666"><span style="color:#5f7186;text-decoration:underline">Бездепозитный бонус форекс $15!</span><span style="margin-left:5px">Открой форекс счёт и получи Welcome Bonus от RoboForex, в размере $15!</span></div>
<!-- header -->
<svg class="abs" style="left:349px;top:255px" width="12" height="16" viewBox="0 0 12 16"><path d="M0 0H12V16L6 11.500L0 16Z" fill="#c2c2c2"/></svg>
<div class="abs" style="left:376px;top:249px;font-size:22px;color:#333;line-height:26px;white-space:nowrap">Вы успешно зарегистрированы</div>
<div class="abs" style="left:350px;top:289px;width:9px;height:9px;border-radius:50%;background:#c6c6c6"></div>
<div class="abs hf" style="left:376px;top:285px">От кого:</div>
<div class="abs hf" style="left:435px;top:285px;color:#333"><b>"Alexey Smirnov"</b> &lt;info@e.bankruptcy-auction.ru&gt;</div>
<svg class="abs" style="left:747px;top:288px" width="10" height="10" viewBox="0 0 10 10"><circle cx="3.800" cy="3.800" r="2.800" fill="none" stroke="#777" stroke-width="1.500"/><path d="M6 6L9.200 9.200" stroke="#777" stroke-width="1.800"/></svg>
<div class="abs hf" style="left:376px;top:308px">Кому:</div>
<div class="abs hf" style="left:435px;top:308px">"Friend"</div>
<div class="abs hf" style="left:376px;top:331px">вчера, 23:07</div>
<!-- avatar -->
<div class="abs" style="left:1477px;top:249px;width:90px;height:90px;background:#fdaec6;border:1px solid #f29bb6"></div>
<div class="abs" style="left:1477px;top:261px;width:90px;text-align:center;font-size:63px;line-height:62px;color:#fff;font-weight:400;transform:scaleX(0.94)">A</div>

<!-- email body -->
<div class="abs" style="left:349px;top:390px;width:1218px;height:640px;background:#1f1d1e"></div>
<svg class="abs" style="left:633px;top:450px" width="650" height="323" viewBox="0 0 650 323">
<defs>
<linearGradient id="sky" x1="0" y1="0" x2="0" y2="1"><stop offset="0" stop-color="#2e2c2d"/><stop offset="0.100" stop-color="#343233"/><stop offset="0.300" stop-color="#3b3735"/><stop offset="0.550" stop-color="#423c39"/><stop offset="0.800" stop-color="#3d3836"/><stop offset="1" stop-color="#2f2d2d"/></linearGradient>
<filter id="bl" x="-5%" y="-5%" width="110%" height="110%"><feGaussianBlur stdDeviation="1.100"/></filter>
<filter id="bl2" x="-5%" y="-5%" width="110%" height="110%"><feGaussianBlur stdDeviation="0.500"/></filter>
</defs>
<rect width="650" height="323" fill="url(#sky)"/>
<g filter="url(#bl)">
 <!-- far skyline -->
 <rect x="0" y="34" width="120" height="22" fill="#3c3937"/>
 <rect x="110" y="26" width="8" height="18" fill="#2a2829"/>
 <rect x="130" y="40" width="160" height="20" fill="#3a3735"/>
 <rect x="205" y="8" width="52" height="36" fill="#383536"/>
 <rect x="300" y="20" width="18" height="30" fill="#3a3736"/>
 <rect x="352" y="16" width="40" height="34" fill="#353334"/>
 <rect x="540" y="42" width="110" height="22" fill="#3d3a38"/>
 <!-- tower -->
 <rect x="437" y="0" width="56" height="100" fill="#403b38"/>
 <rect x="441" y="6" width="48" height="20" fill="#353130"/>
 <rect x="445" y="42" width="6" height="22" fill="#2f2c2b"/><rect x="470" y="42" width="10" height="24" fill="#2f2c2b"/>
 <!-- mid roofs / houses -->
 <rect x="0" y="58" width="200" height="28" fill="#3a3634"/>
 <rect x="20" y="66" width="90" height="10" fill="#2c2a29"/>
 <rect x="130" y="44" width="60" height="10" fill="#2c2a29"/>
 <rect x="0" y="86" width="120" height="36" fill="#35312f"/>
 <rect x="40" y="96" width="30" height="18" fill="#48433f"/>
 <rect x="115" y="92" width="85" height="12" fill="#2b2928"/>
 <path d="M165 92L190 72L215 92Z" fill="#4a4540"/>
 <path d="M195 112L215 86L240 112Z" fill="#553a32"/>
 <rect x="195" y="100" width="30" height="20" fill="#4d3831"/>
 <rect x="120" y="106" width="80" height="22" fill="#36312f"/>
 <path d="M130 128L170 108L230 128Z" fill="#45403b"/>
 <rect x="330" y="60" width="90" height="40" fill="#33302e"/>
 <rect x="420" y="92" width="50" height="16" fill="#55392f"/>
 <rect x="495" y="66" width="90" height="26" fill="#45413e"/>
 <rect x="500" y="92" width="100" height="14" fill="#4a443f"/>
 <rect x="585" y="74" width="65" height="14" fill="#2d2b2a"/>
 <rect x="600" y="88" width="50" height="36" fill="#49443f"/>
 <rect x="440" y="106" width="160" height="42" fill="#302d2b"/>
 <path d="M520 150L545 112L600 112L570 150Z" fill="#3a3532"/>
 <rect x="595" y="126" width="55" height="26" fill="#4b4641"/>
 <rect x="370" y="112" width="70" height="36" fill="#35302e"/>
 <!-- left dark roofs above big bldg -->
 <path d="M0 122L100 122L100 138L0 138Z" fill="#2e2b2a"/>
 <path d="M20 138L50 126L80 138Z" fill="#4a4440"/>
 <rect x="103" y="126" width="105" height="16" fill="#2f2c2a"/>
 <rect x="208" y="128" width="65" height="18" fill="#332f2d"/>
 <!-- left big buildings -->
 <rect x="0" y="138" width="100" height="92" fill="#4b4541"/>
 <rect x="103" y="142" width="103" height="80" fill="#48423d"/>
 <rect x="208" y="146" width="64" height="70" fill="#4a433d"/>
 <!-- middle (behind title) -->
 <rect x="272" y="150" width="90" height="90" fill="#453f3a"/>
 <rect x="362" y="164" width="103" height="96" fill="#453e39"/>
 <path d="M375 166L400 150L460 150L470 166Z" fill="#312d2b"/>
 <path d="M465 180L485 156L560 156L572 180Z" fill="#34302d"/>
 <rect x="465" y="180" width="104" height="86" fill="#49423c"/>
 <rect x="569" y="170" width="81" height="153" fill="#4b4540"/>
 <rect x="572" y="160" width="78" height="14" fill="#554b44"/>
 <!-- trees -->
 <ellipse cx="30" cy="232" rx="30" ry="14" fill="#312e2c"/>
 <ellipse cx="90" cy="236" rx="34" ry="13" fill="#2f2c2b"/>
 <ellipse cx="160" cy="230" rx="40" ry="12" fill="#34302e"/>
 <ellipse cx="250" cy="236" rx="50" ry="12" fill="#36322f"/>
 <ellipse cx="360" cy="248" rx="60" ry="10" fill="#35312f"/>
 <!-- street -->
 <rect x="0" y="250" width="569" height="40" fill="#3d3937" opacity="0.900"/>
 <rect x="380" y="266" width="190" height="26" fill="#37332f"/>
 <rect x="485" y="300" width="42" height="18" fill="#4d2f2b"/>
 <!-- water / boats -->
 <rect x="0" y="288" width="569" height="35" fill="#2e2c2c"/>
 <path d="M0 296L40 284L50 296L40 302L0 304Z" fill="#45413f"/>
 <rect x="90" y="292" width="100" height="6" fill="#3c3937"/>
 <rect x="155" y="304" width="80" height="12" fill="#34363a"/>
 <rect x="250" y="296" width="120" height="10" fill="#3a3634"/>
</g>
<g filter="url(#bl2)">
<rect x="8.8" y="154.2" width="2.2" height="3.5" fill="#2f2b29" opacity="0.75"/><rect x="20.5" y="154.2" width="2.2" height="3.5" fill="#2f2b29" opacity="0.75"/><rect x="32.3" y="154.2" width="2.2" height="3.5" fill="#2f2b29" opacity="0.75"/><rect x="44.0" y="154.2" width="2.2" height="3.5" fill="#2f2b29" opacity="0.75"/><rect x="55.8" y="154.2" width="2.2" height="3.5" fill="#2f2b29" opacity="0.75"/><rect x="67.5" y="154.2" width="2.2" height="3.5" fill="#2f2b29" opacity="0.75"/><rect x="79.3" y="154.2" width="2.2" height="3.5" fill="#2f2b29" opacity="0.75"/><rect x="91.0" y="154.2" width="2.2" height="3.5" fill="#2f2b29" opacity="0.75"/><rect x="8.8" y="170.2" width="2.2" height="3.5" fill="#2f2b29" opacity="0.75"/><rect x="20.5" y="170.2" width="2.2" height="3.5" fill="#2f2b29" opacity="0.75"/><rect x="32.3" y="170.2" width="2.2" height="3.5" fill="#2f2b29" opacity="0.75"/><rect x="44.0" y="170.2" width="2.2" height="3.5" fill="#2f2b29" opacity="0.75"/><rect x="55.8" y="170.2" width="2.2" height="3.5" fill="#2f2b29" opacity="0.75"/><rect x="67.5" y="170.2" width="2.2" height="3.5" fill="#2f2b29" opacity="0.75"/><rect x="79.3" y="170.2" width="2.2" height="3.5" fill="#2f2b29" opacity="0.75"/><rect x="91.0" y="170.2" width="2.2" height="3.5" fill="#2f2b29" opacity="0.75"/><rect x="8.8" y="186.2" width="2.2" height="3.5" fill="#2f2b29" opacity="0.75"/><rect x="20.5" y="186.2" width="2.2" height="3.5" fill="#2f2b29" opacity="0.75"/><rect x="32.3" y="186.2" width="2.2" height="3.5" fill="#2f2b29" opacity="0.75"/><rect x="44.0" y="186.2" width="2.2" height="3.5" fill="#2f2b29" opacity="0.75"/><rect x="55.8" y="186.2" width="2.2" height="3.5" fill="#2f2b29" opacity="0.75"/><rect x="67.5" y="186.2" width="2.2" height="3.5" fill="#2f2b29" opacity="0.75"/><rect x="79.3" y="186.2" width="2.2" height="3.5" fill="#2f2b29" opacity="0.75"/><rect x="91.0" y="186.2" width="2.2" height="3.5" fill="#2f2b29" opacity="0.75"/><rect x="8.8" y="202.2" width="2.2" height="3.5" fill="#2f2b29" opacity="0.75"/><rect x="20.5" y="202.2" width="2.2" height="3.5" fill="#2f2b29" opacity="0.75"/><rect x="32.3" y="202.2" width="2.2" height="3.5" fill="#2f2b29" opacity="0.75"/><rect x="44.0" y="202.2" width="2.2" height="3.5" fill="#2f2b29" opacity="0.75"/><rect x="55.8" y="202.2" width="2.2" height="3.5" fill="#2f2b29" opacity="0.75"/><rect x="67.5" y="202.2" width="2.2" height="3.5" fill="#2f2b29" opacity="0.75"/><rect x="79.3" y="202.2" width="2.2" height="3.5" fill="#2f2b29" opacity="0.75"/><rect x="91.0" y="202.2" width="2.2" height="3.5" fill="#2f2b29" opacity="0.75"/>
<rect x="111.9" y="155.8" width="2.2" height="3.5" fill="#2f2b29" opacity="0.75"/><rect x="125.9" y="155.8" width="2.2" height="3.5" fill="#2f2b29" opacity="0.75"/><rect x="139.9" y="155.8" width="2.2" height="3.5" fill="#2f2b29" opacity="0.75"/><rect x="153.9" y="155.8" width="2.2" height="3.5" fill="#2f2b29" opacity="0.75"/><rect x="167.9" y="155.8" width="2.2" height="3.5" fill="#2f2b29" opacity="0.75"/><rect x="181.9" y="155.8" width="2.2" height="3.5" fill="#2f2b29" opacity="0.75"/><rect x="195.9" y="155.8" width="2.2" height="3.5" fill="#2f2b29" opacity="0.75"/><rect x="111.9" y="170.8" width="2.2" height="3.5" fill="#2f2b29" opacity="0.75"/><rect x="125.9" y="170.8" width="2.2" height="3.5" fill="#2f2b29" opacity="0.75"/><rect x="139.9" y="170.8" width="2.2" height="3.5" fill="#2f2b29" opacity="0.75"/><rect x="153.9" y="170.8" width="2.2" height="3.5" fill="#2f2b29" opacity="0.75"/><rect x="167.9" y="170.8" width="2.2" height="3.5" fill="#2f2b29" opacity="0.75"/><rect x="181.9" y="170.8" width="2.2" height="3.5" fill="#2f2b29" opacity="0.75"/><rect x="195.9" y="170.8" width="2.2" height="3.5" fill="#2f2b29" opacity="0.75"/><rect x="111.9" y="185.8" width="2.2" height="3.5" fill="#2f2b29" opacity="0.75"/><rect x="125.9" y="185.8" width="2.2" height="3.5" fill="#2f2b29" opacity="0.75"/><rect x="139.9" y="185.8" width="2.2" height="3.5" fill="#2f2b29" opacity="0.75"/><rect x="153.9" y="185.8" width="2.2" height="3.5" fill="#2f2b29" opacity="0.75"/><rect x="167.9" y="185.8" width="2.2" height="3.5" fill="#2f2b29" opacity="0.75"/><rect x="181.9" y="185.8" width="2.2" height="3.5" fill="#2f2b29" opacity="0.75"/><rect x="195.9" y="185.8" width="2.2" height="3.5" fill="#2f2b29" opacity="0.75"/><rect x="111.9" y="200.8" width="2.2" height="3.5" fill="#2f2b29" opacity="0.75"/><rect x="125.9" y="200.8" width="2.2" height="3.5" fill="#2f2b29" opacity="0.75"/><rect x="139.9" y="200.8" width="2.2" height="3.5" fill="#2f2b29" opacity="0.75"/><rect x="153.9" y="200.8" width="2.2" height="3.5" fill="#2f2b29" opacity="0.75"/><rect x="167.9" y="200.8" width="2.2" height="3.5" fill="#2f2b29" opacity="0.75"/><rect x="181.9" y="200.8" width="2.2" height="3.5" fill="#2f2b29" opacity="0.75"/><rect x="195.9" y="200.8" width="2.2" height="3.5" fill="#2f2b29" opacity="0.75"/>
<rect x="216.4" y="158.8" width="2.2" height="3.5" fill="#2f2b29" opacity="0.75"/><rect x="231.4" y="158.8" width="2.2" height="3.5" fill="#2f2b29" opacity="0.75"/><rect x="246.4" y="158.8" width="2.2" height="3.5" fill="#2f2b29" opacity="0.75"/><rect x="261.4" y="158.8" width="2.2" height="3.5" fill="#2f2b29" opacity="0.75"/><rect x="216.4" y="171.8" width="2.2" height="3.5" fill="#2f2b29" opacity="0.75"/><rect x="231.4" y="171.8" width="2.2" height="3.5" fill="#2f2b29" opacity="0.75"/><rect x="246.4" y="171.8" width="2.2" height="3.5" fill="#2f2b29" opacity="0.75"/><rect x="261.4" y="171.8" width="2.2" height="3.5" fill="#2f2b29" opacity="0.75"/><rect x="216.4" y="184.8" width="2.2" height="3.5" fill="#2f2b29" opacity="0.75"/><rect x="231.4" y="184.8" width="2.2" height="3.5" fill="#2f2b29" opacity="0.75"/><rect x="246.4" y="184.8" width="2.2" height="3.5" fill="#2f2b29" opacity="0.75"/><rect x="261.4" y="184.8" width="2.2" height="3.5" fill="#2f2b29" opacity="0.75"/><rect x="216.4" y="197.8" width="2.2" height="3.5" fill="#2f2b29" opacity="0.75"/><rect x="231.4" y="197.8" width="2.2" height="3.5" fill="#2f2b29" opacity="0.75"/><rect x="246.4" y="197.8" width="2.2" height="3.5" fill="#2f2b29" opacity="0.75"/><rect x="261.4" y="197.8" width="2.2" height="3.5" fill="#2f2b29" opacity="0.75"/>
<rect x="372.9" y="183.0" width="2.2" height="3.5" fill="#2f2b29" opacity="0.5"/><rect x="388.9" y="183.0" width="2.2" height="3.5" fill="#2f2b29" opacity="0.5"/><rect x="404.9" y="183.0" width="2.2" height="3.5" fill="#2f2b29" opacity="0.5"/><rect x="420.9" y="183.0" width="2.2" height="3.5" fill="#2f2b29" opacity="0.5"/><rect x="436.9" y="183.0" width="2.2" height="3.5" fill="#2f2b29" opacity="0.5"/><rect x="452.9" y="183.0" width="2.2" height="3.5" fill="#2f2b29" opacity="0.5"/><rect x="372.9" y="200.5" width="2.2" height="3.5" fill="#2f2b29" opacity="0.5"/><rect x="388.9" y="200.5" width="2.2" height="3.5" fill="#2f2b29" opacity="0.5"/><rect x="404.9" y="200.5" width="2.2" height="3.5" fill="#2f2b29" opacity="0.5"/><rect x="420.9" y="200.5" width="2.2" height="3.5" fill="#2f2b29" opacity="0.5"/><rect x="436.9" y="200.5" width="2.2" height="3.5" fill="#2f2b29" opacity="0.5"/><rect x="452.9" y="200.5" width="2.2" height="3.5" fill="#2f2b29" opacity="0.5"/><rect x="372.9" y="218.0" width="2.2" height="3.5" fill="#2f2b29" opacity="0.5"/><rect x="388.9" y="218.0" width="2.2" height="3.5" fill="#2f2b29" opacity="0.5"/><rect x="404.9" y="218.0" width="2.2" height="3.5" fill="#2f2b29" opacity="0.5"/><rect x="420.9" y="218.0" width="2.2" height="3.5" fill="#2f2b29" opacity="0.5"/><rect x="436.9" y="218.0" width="2.2" height="3.5" fill="#2f2b29" opacity="0.5"/><rect x="452.9" y="218.0" width="2.2" height="3.5" fill="#2f2b29" opacity="0.5"/><rect x="372.9" y="235.5" width="2.2" height="3.5" fill="#2f2b29" opacity="0.5"/><rect x="388.9" y="235.5" width="2.2" height="3.5" fill="#2f2b29" opacity="0.5"/><rect x="404.9" y="235.5" width="2.2" height="3.5" fill="#2f2b29" opacity="0.5"/><rect x="420.9" y="235.5" width="2.2" height="3.5" fill="#2f2b29" opacity="0.5"/><rect x="436.9" y="235.5" width="2.2" height="3.5" fill="#2f2b29" opacity="0.5"/><rect x="452.9" y="235.5" width="2.2" height="3.5" fill="#2f2b29" opacity="0.5"/>
<rect x="476.7" y="194.5" width="2.2" height="3.5" fill="#2f2b29" opacity="0.6"/><rect x="496.3" y="194.5" width="2.2" height="3.5" fill="#2f2b29" opacity="0.6"/><rect x="515.9" y="194.5" width="2.2" height="3.5" fill="#2f2b29" opacity="0.6"/><rect x="535.5" y="194.5" width="2.2" height="3.5" fill="#2f2b29" opacity="0.6"/><rect x="555.1" y="194.5" width="2.2" height="3.5" fill="#2f2b29" opacity="0.6"/><rect x="476.7" y="211.0" width="2.2" height="3.5" fill="#2f2b29" opacity="0.6"/><rect x="496.3" y="211.0" width="2.2" height="3.5" fill="#2f2b29" opacity="0.6"/><rect x="515.9" y="211.0" width="2.2" height="3.5" fill="#2f2b29" opacity="0.6"/><rect x="535.5" y="211.0" width="2.2" height="3.5" fill="#2f2b29" opacity="0.6"/><rect x="555.1" y="211.0" width="2.2" height="3.5" fill="#2f2b29" opacity="0.6"/><rect x="476.7" y="227.5" width="2.2" height="3.5" fill="#2f2b29" opacity="0.6"/><rect x="496.3" y="227.5" width="2.2" height="3.5" fill="#2f2b29" opacity="0.6"/><rect x="515.9" y="227.5" width="2.2" height="3.5" fill="#2f2b29" opacity="0.6"/><rect x="535.5" y="227.5" width="2.2" height="3.5" fill="#2f2b29" opacity="0.6"/><rect x="555.1" y="227.5" width="2.2" height="3.5" fill="#2f2b29" opacity="0.6"/><rect x="476.7" y="244.0" width="2.2" height="3.5" fill="#2f2b29" opacity="0.6"/><rect x="496.3" y="244.0" width="2.2" height="3.5" fill="#2f2b29" opacity="0.6"/><rect x="515.9" y="244.0" width="2.2" height="3.5" fill="#2f2b29" opacity="0.6"/><rect x="535.5" y="244.0" width="2.2" height="3.5" fill="#2f2b29" opacity="0.6"/><rect x="555.1" y="244.0" width="2.2" height="3.5" fill="#2f2b29" opacity="0.6"/>
<rect x="581.8" y="191.3" width="3" height="2.5" fill="#2f2b29" opacity="0.6"/><rect x="600.2" y="191.3" width="3" height="2.5" fill="#2f2b29" opacity="0.6"/><rect x="618.8" y="191.3" width="3" height="2.5" fill="#2f2b29" opacity="0.6"/><rect x="637.2" y="191.3" width="3" height="2.5" fill="#2f2b29" opacity="0.6"/><rect x="581.8" y="208.5" width="3" height="2.5" fill="#2f2b29" opacity="0.6"/><rect x="600.2" y="208.5" width="3" height="2.5" fill="#2f2b29" opacity="0.6"/><rect x="618.8" y="208.5" width="3" height="2.5" fill="#2f2b29" opacity="0.6"/><rect x="637.2" y="208.5" width="3" height="2.5" fill="#2f2b29" opacity="0.6"/><rect x="581.8" y="225.6" width="3" height="2.5" fill="#2f2b29" opacity="0.6"/><rect x="600.2" y="225.6" width="3" height="2.5" fill="#2f2b29" opacity="0.6"/><rect x="618.8" y="225.6" width="3" height="2.5" fill="#2f2b29" opacity="0.6"/><rect x="637.2" y="225.6" width="3" height="2.5" fill="#2f2b29" opacity="0.6"/><rect x="581.8" y="242.8" width="3" height="2.5" fill="#2f2b29" opacity="0.6"/><rect x="600.2" y="242.8" width="3" height="2.5" fill="#2f2b29" opacity="0.6"/><rect x="618.8" y="242.8" width="3" height="2.5" fill="#2f2b29" opacity="0.6"/><rect x="637.2" y="242.8" width="3" height="2.5" fill="#2f2b29" opacity="0.6"/><rect x="581.8" y="259.9" width="3" height="2.5" fill="#2f2b29" opacity="0.6"/><rect x="600.2" y="259.9" width="3" height="2.5" fill="#2f2b29" opacity="0.6"/><rect x="618.8" y="259.9" width="3" height="2.5" fill="#2f2b29" opacity="0.6"/><rect x="637.2" y="259.9" width="3" height="2.5" fill="#2f2b29" opacity="0.6"/><rect x="581.8" y="277.0" width="3" height="2.5" fill="#2f2b29" opacity="0.6"/><rect x="600.2" y="277.0" width="3" height="2.5" fill="#2f2b29" opacity="0.6"/><rect x="618.8" y="277.0" width="3" height="2.5" fill="#2f2b29" opacity="0.6"/><rect x="637.2" y="277.0" width="3" height="2.5" fill="#2f2b29" opacity="0.6"/><rect x="581.8" y="294.2" width="3" height="2.5" fill="#2f2b29" opacity="0.6"/><rect x="600.2" y="294.2" width="3" height="2.5" fill="#2f2b29" opacity="0.6"/><rect x="618.8" y="294.2" width="3" height="2.5" fill="#2f2b29" opacity="0.6"/><rect x="637.2" y="294.2" width="3" height="2.5" fill="#2f2b29" opacity="0.6"/>
</g>
</svg>

<svg class="abs" style="left:893px;top:483px" width="130" height="130" viewBox="0 0 130 130">
<defs><clipPath id="pc"><circle cx="65" cy="65" r="60"/></clipPath><filter id="pb"><feGaussianBlur stdDeviation="0.800"/></filter>
<linearGradient id="fg" x1="0" y1="0" x2="1" y2="0"><stop offset="0" stop-color="#c98f74"/><stop offset="0.550" stop-color="#c4876b"/><stop offset="1" stop-color="#a36c55"/></linearGradient></defs>
<circle cx="65" cy="65" r="63" fill="#fff"/>
<g clip-path="url(#pc)" filter="url(#pb)">
 <rect width="130" height="130" fill="#fefefe"/>
 <rect x="66" y="52" width="19" height="18" fill="#b07a63"/>
 <path d="M36 70L64 65L70 76L88 58L114 72Q121 78 118 90L108 112L84 128L44 128L30 108L22 100Z" fill="#1a1d28"/>
 <path d="M80 74L102 70L98 104L78 114Z" fill="#262c3c" opacity="0.800"/>
 <path d="M40 74L56 72L52 100L36 96Z" fill="#20242f" opacity="0.800"/>
 <path d="M62 65L76 57L91 60L79 86L71 76L61 94Z" fill="#cbd1ea"/>
 <path d="M68 67L76 64L80 70L74 77L64 101L59 96L68 75Z" fill="#1a274d"/>
 <path d="M62 65L56 96L64 112" stroke="#0f1118" stroke-width="1.200" fill="none"/>
 <path d="M91 60L76 92L66 112" stroke="#0f1118" stroke-width="1.200" fill="none"/>
 <ellipse cx="74" cy="40" rx="17" ry="21" fill="url(#fg)"/>
 <ellipse cx="91.500" cy="43" rx="2.200" ry="5" fill="#b47a62"/>
 <path d="M56 44Q51 10 74 9Q95 9 92 42Q91 31 87 25Q73 28 62 24Q58 31 56 44Z" fill="#1c1412"/>
 <path d="M60 33Q65 31 70 33" stroke="#2b1b16" stroke-width="2" fill="none"/><path d="M76 33Q81 31 87 33" stroke="#2b1b16" stroke-width="2" fill="none"/>
 <ellipse cx="65" cy="36.500" rx="2.800" ry="1.300" fill="#3a2620"/><ellipse cx="81" cy="36.500" rx="2.800" ry="1.300" fill="#3a2620"/>
 <path d="M72 38L70.500 46L75 46.500" stroke="#a06a54" stroke-width="1.300" fill="none"/>
 <path d="M67 52.500Q73 51 79 52.500" stroke="#8a4e42" stroke-width="1.800" fill="none"/>
 <path d="M19 99Q26 95 34 100L42 112L36 115L24 106Z" fill="#d9a08a"/>
 <path d="M28 106L42 112L50 116L48 124L34 116Z" fill="#14161e"/>
 <path d="M49 114L57 113L57 124L50 124Z" fill="#dfe3f4"/>
 <path d="M56 117Q70 113 86 117L83 125L58 126Z" fill="#d39a82"/>
</g>
<circle cx="65" cy="65" r="60" fill="none" stroke="#c4c4c4" stroke-width="0.700" stroke-dasharray="2.500 1.200"/>
</svg>

<div class="abs" style="left:633px;top:632px;width:650px;text-align:center;font-size:48px;font-weight:bold;color:#fff;line-height:56px;letter-spacing:0.2px">Здравствуйте</div>
<div class="abs" style="left:633px;top:704px;width:650px;text-align:center;font-size:14px;font-weight:bold;color:#fff;line-height:24px;letter-spacing:0.15px">Я, Алексей Смирнов и я знаю всё о том, как преуспеть с помощью<br>аукционов по банкротству.</div>
<div class="abs" style="left:633px;top:773px;width:650px;height:260px;background:#fff"></div>
<div class="abs" style="left:640px;top:791px;width:650px;text-align:center;font-size:16px;font-weight:bold;color:#111;line-height:18px;white-space:nowrap">Поздравляю Вас! Вы успешно зарегистрированы.</div>
<div class="abs" style="left:642px;top:842px;width:650px;text-align:center;font-size:18px;color:#222;line-height:25px;white-space:nowrap">"Как покупать автомобили, квартиры и коммерческую<br><span style="position:relative;left:-9px">недвижимость за 1% от их стоимости"</span></div>
<div class="abs" style="left:702px;top:920px;font-size:16px;color:#333;line-height:18px;white-space:nowrap">Чему вы сможете научиться?</div>
<div class="abs" style="left:691px;top:983px;width:5px;height:5px;border-radius:50%;background:#222"></div>
<div class="abs" style="left:707px;top:976px;font-size:16px;color:#333;line-height:18px;white-space:nowrap">как зарабатывать со сделок на аукционах</div>

<!-- agent widget -->
<div class="abs" style="left:1435px;top:983px;width:199px;height:28px;background:#b9d7ef;border:1px solid #9ec4e4;border-bottom:none;border-radius:4px 4px 0 0"></div>
<div class="abs" style="left:1444px;top:988px;font-size:14px;font-weight:bold;color:#28a83c;line-height:16px">@</div>
<div class="abs" style="left:1494px;top:989px;font-size:13px;font-weight:bold;color:#3d4a57;line-height:15px;white-space:nowrap">Mail.Ru Агент</div>
<div class="abs" style="left:1606px;top:984px;width:1px;height:26px;background:#9ec4e4"></div>
<svg class="abs" style="left:1613px;top:989px" width="16" height="16" viewBox="0 0 16 16"><path d="M3.500 1L6 4.500L4.800 6.200Q6.500 9.500 9.800 11.200L11.500 10L15 12.500Q14.500 15 12 15Q6 14 2.500 8Q0.500 4 1 2.500Q1.800 1 3.500 1Z" fill="#888"/></svg>


<!-- ===== scrollbar ===== -->
<div id="vscroll" class="abs"></div>
<svg class="abs" style="left:1669px;top:76px" width="7" height="4" viewBox="0 0 7 4"><path d="M0 4H7L3.500 0Z" fill="#606060"/></svg>
<svg class="abs" style="left:1669px;top:1000px" width="7" height="4" viewBox="0 0 7 4"><path d="M0 0H7L3.500 4Z" fill="#505050"/></svg>
<div class="abs" style="left:1664px;top:87px;width:15px;height:412px;border:1px solid #979797;border-radius:2px;background:linear-gradient(90deg,#f6f6f6 0,#ececec 45%,#d9d9db 55%,#cacace 100%)"></div>
<div class="abs" style="left:1668px;top:289px;width:7px;height:8px;background:repeating-linear-gradient(#555 0,#555 1px,#e8e8e8 1px,#e8e8e8 2px)"></div>

<!-- ===== taskbar ===== -->
<div id="taskbar" class="abs">
 <div class="abs" style="left:0;top:0;width:1680px;height:40px;background:
  radial-gradient(ellipse 75px 42px at 700px 44px,rgba(125,45,55,.70),rgba(125,45,55,0) 100%),
  radial-gradient(ellipse 60px 26px at 1025px 34px,rgba(135,65,60,.65),rgba(135,65,60,0) 100%),
  radial-gradient(ellipse 70px 30px at 965px 12px,rgba(50,80,120,.45),rgba(50,80,120,0) 100%),
  radial-gradient(ellipse 60px 22px at 615px 14px,rgba(60,80,105,.35),rgba(60,80,105,0) 100%),
  linear-gradient(90deg,#1c2330 0,#1f2937 380px,#1e2836 600px,#1c2230 800px,#1d2a3c 930px,#1b2331 1100px,#1a212e 1450px,#181e2a 1680px)"></div>
 <div class="abs" style="left:1044px;top:4px;width:3px;height:2px;background:#c8d0dc;border-radius:50%"></div><div class="abs" style="left:1062px;top:22px;width:4px;height:3px;background:#b8c0cc;border-radius:50%"></div><div class="abs" style="left:1083px;top:4px;width:3px;height:2px;background:#c8d0dc;border-radius:50%"></div>
 <div class="abs" style="left:0;top:0;width:1680px;height:1px;background:#5f6875"></div>
 <div class="abs" style="left:0;top:1px;width:1680px;height:1px;background:rgba(255,255,255,.12)"></div>
 <!-- start orb -->
 <div class="abs" style="left:8px;top:2px;width:38px;height:37px;border-radius:50%;background:radial-gradient(ellipse 60% 45% at 50% 100%,#4fd0f8 0,#1a8ad8 45%,rgba(14,84,160,0) 100%),linear-gradient(#7a9cc2 0,#5f86b4 44%,#0d58a6 52%,#0b4f98 100%);border:1px solid #8fa4bd;box-shadow:0 0 2px rgba(150,190,230,.6),inset 0 0 3px rgba(10,30,60,.7)"></div>
 <svg class="abs" style="left:15px;top:9px" width="24" height="24" viewBox="0 0 24 24"><path d="M2 3.500Q6.500 0.500 11 3.500L9.800 11Q5.500 8.500 0.500 11.500Z" fill="#ea5a25"/><path d="M12.500 4Q17 7 22.500 3.500L21 11Q16 14 11.300 11.300Z" fill="#8cc63f"/><path d="M0.200 13Q5 10.500 9.500 13L8.300 20.500Q4 18 -1 21Z" fill="#3aa0e8"/><path d="M11 13.200Q15.500 16 20.800 12.800L19.500 20.500Q14.800 23.500 9.800 21Z" fill="#f9c21a"/></svg>
 <!-- IE -->
 <svg class="abs" style="left:72px;top:3px" width="36" height="34" viewBox="0 0 36 34"><path d="M7 28Q1 24 6 15" fill="none" stroke="#f2c318" stroke-width="2.600"/><circle cx="18" cy="18" r="10.800" fill="none" stroke="#2fa8ec" stroke-width="6.800"/><rect x="10" y="15" width="22" height="5.500" fill="#2fa8ec"/><path d="M20 20.500H33V24L27 28L20 25Z" fill="#1c2432"/><path d="M24 24.500Q27 27 30.500 23" fill="none" stroke="#2fa8ec" stroke-width="4"/><path d="M6 15Q12 3 27 2Q33 2.500 31 8" fill="none" stroke="#f2c318" stroke-width="2.600"/><circle cx="18" cy="18" r="10.800" fill="none" stroke="#7fd4fa" stroke-width="1.500" opacity="0.500"/></svg>
 <!-- explorer button -->
 <div class="abs tb" style="left:122px;width:58px;background:linear-gradient(#5a616b 0,#454b55 48%,#2b3038 52%,#363c45 100%)"></div>
 <svg class="abs" style="left:134px;top:6px" width="34" height="29" viewBox="0 0 34 29"><path d="M1 3H13L15 5H33V22H1Z" fill="#e8c766"/><rect x="5" y="1" width="3" height="3" fill="#2ea043"/><rect x="13" y="2" width="3" height="3" fill="#e0452f"/><rect x="21" y="3" width="4" height="3" fill="#3a8ee0"/><path d="M0 8H34L33 22H1Z" fill="#f6de8c"/><path d="M5 15H29V28H23V20H11V28H5Z" fill="#8fc8ea" stroke="#5a9cc8" stroke-width="1"/></svg>
 <!-- chrome -->
 <svg class="abs" style="left:198px;top:5px" width="30" height="30" viewBox="0 0 30 30"><circle cx="15" cy="15" r="14.500" fill="#dd4b3e"/><path d="M15 15L2.500 7.800A14.500 14.500 0 0 0 11 28.900Z" fill="#1da462"/><path d="M15 15L11 28.900A14.500 14.500 0 0 0 29.300 12.500Z" fill="#ffcd40"/><path d="M15 15L29.300 12.500L15 9Z" fill="#dd4b3e"/><circle cx="15" cy="15" r="6.600" fill="#fff"/><circle cx="15" cy="15" r="5.200" fill="#4a8af4"/></svg>
 <!-- opera button active -->
 <div class="abs tb" style="left:246px;width:58px;background:linear-gradient(#b7babf 0,#9a9ea4 48%,#7d8188 52%,#8f9399 100%);border-color:#c9ccd0"></div>
 <svg class="abs" style="left:260px;top:4px" width="30" height="31" viewBox="0 0 30 31"><ellipse cx="15" cy="15.500" rx="14.500" ry="15" fill="#e0202a"/><ellipse cx="15" cy="15.500" rx="5.200" ry="11.500" fill="#a5a9af"/><path d="M3 10Q8 2 18 2" fill="none" stroke="#f58a8a" stroke-width="1.500" opacity="0.700"/></svg>
 <!-- A app button -->
 <div class="abs tb" style="left:308px;width:58px;background:linear-gradient(#5a616b 0,#474d57 48%,#2e333b 52%,#3a4049 100%)"></div>
 <div class="abs" style="left:320px;top:5px;font-family:'Liberation Serif',serif;font-size:34px;line-height:34px;color:#1f2a94;font-weight:400;text-shadow:0 0 1px #8aa0ff">A</div>
 <div class="abs" style="left:333px;top:3px;width:6px;height:6px;border-radius:50%;background:#e53030"></div>
 <div class="abs" style="left:339px;top:8px;width:7px;height:7px;border-radius:50%;background:#f0d020"></div>
 <div class="abs" style="left:343px;top:17px;width:9px;height:9px;border-radius:50%;background:#3fa0f0"></div>
 <!-- tray -->
 <div class="abs" style="left:1466px;top:11px;font-size:11.500px;color:#fff;line-height:13px;letter-spacing:-0.2px">RU</div>
 <svg class="abs" style="left:1497px;top:19px" width="9" height="5" viewBox="0 0 9 5"><path d="M0 5H9L4.500 0Z" fill="#fff"/></svg>
 <svg class="abs" style="left:1518px;top:14px" width="16" height="15" viewBox="0 0 16 15"><path d="M1 0V15" stroke="#fff" stroke-width="1.600"/><path d="M3 1.500Q6 0 8.500 1.500Q11 3 14.500 2L12 6L14 9Q11 10 8.500 8.500Q6 7 3 8.500Z" fill="#fff"/></svg>
 <svg class="abs" style="left:1543px;top:13px" width="15" height="16" viewBox="0 0 15 16"><rect x="4.500" y="4.500" width="9.500" height="7" fill="none" stroke="#fff" stroke-width="1.400"/><path d="M6 14.500H13M9.500 11.500V14.500" stroke="#fff" stroke-width="1.400"/><path d="M2.500 0V3M1 3H4V6H1ZM2.500 6V13H5" fill="none" stroke="#fff" stroke-width="1.200"/></svg>
 <svg class="abs" style="left:1566px;top:15px" width="16" height="13" viewBox="0 0 16 13"><path d="M0 4H3L7 0V13L3 9H0Z" fill="#fff"/><path d="M9 4Q10.500 6.500 9 9M11.500 2.500Q14 6.500 11.500 10.500M13.800 1Q17.500 6.500 13.800 12" fill="none" stroke="#fff" stroke-width="1.100"/></svg>
 <div class="abs" style="left:1596px;top:6px;width:60px;text-align:center;font-size:11.500px;color:#fff;line-height:13px;letter-spacing:-0.35px">15:06:18</div>
 <div class="abs" style="left:1596px;top:23px;width:60px;text-align:center;font-size:11.500px;color:#fff;line-height:13px;letter-spacing:-0.35px">10.04.2015</div>
 <div class="abs" style="left:1666px;top:1px;width:14px;height:39px;border-left:1px solid #0d1118;background:linear-gradient(135deg,#4a525e 0,#2c323c 45%,#171c24 55%,#20252e 100%);box-shadow:inset 1px 0 0 rgba(255,255,255,.25)"></div>
</div>

</body>
</html>
